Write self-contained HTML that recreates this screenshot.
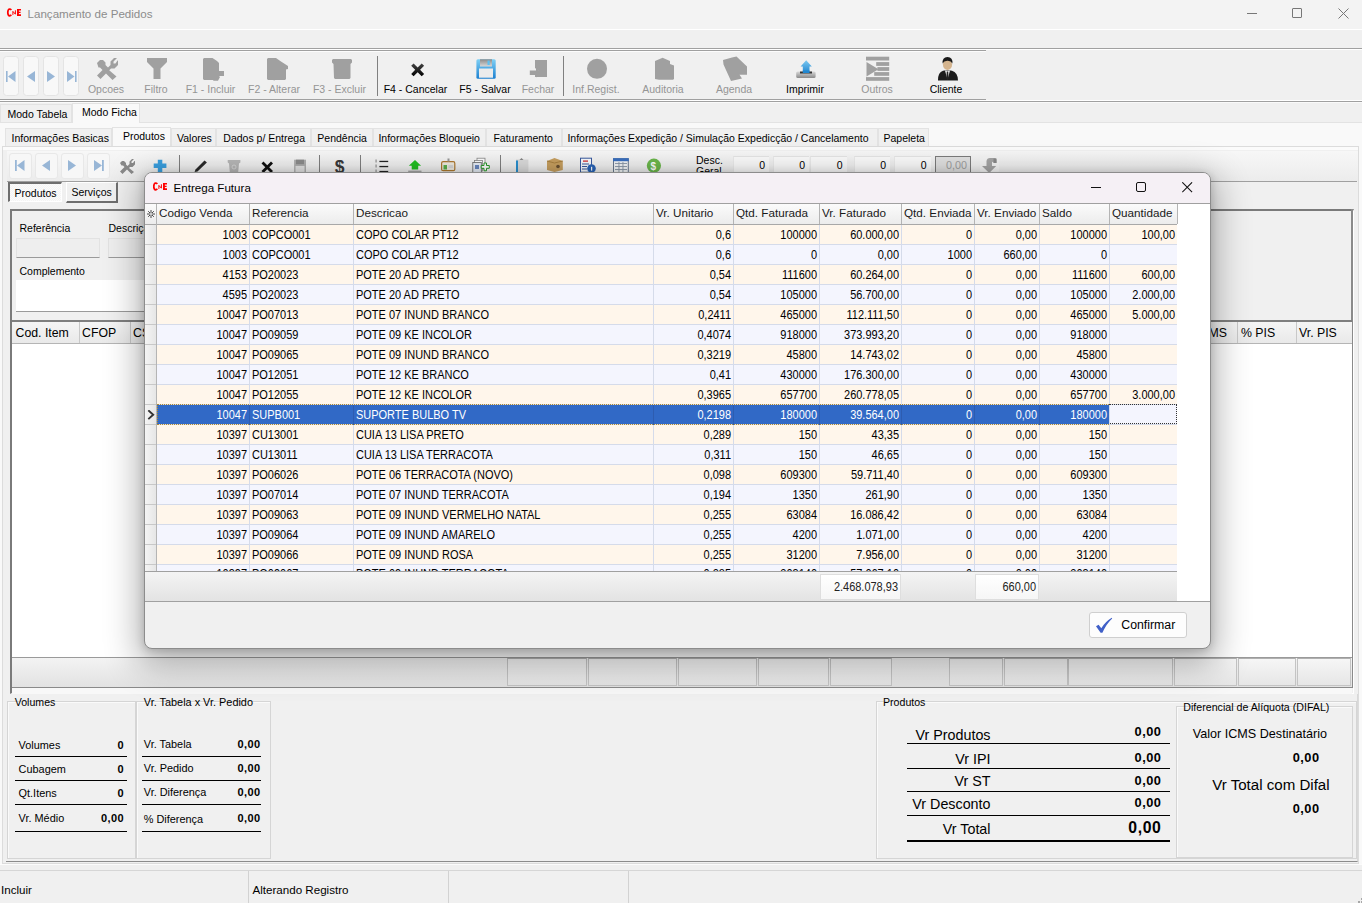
<!DOCTYPE html><html><head><meta charset="utf-8"><style>
html,body{margin:0;padding:0;}
body{width:1362px;height:903px;position:relative;overflow:hidden;background:#f0f0f0;font-family:"Liberation Sans",sans-serif;}
.t{position:absolute;white-space:nowrap;line-height:1;}
div{box-sizing:border-box;}
</style></head><body>
<div style="position:absolute;left:0px;top:0px;width:1362px;height:29px;background:#f3f3f3;"></div>
<div style="position:absolute;left:0px;top:29px;width:1362px;height:1px;background:#ffffff;"></div>
<svg style="position:absolute;left:6px;top:8px" width="16" height="10" viewBox="6 8 16 10"><path d="M11.3 10.0 Q10.6 9.0 9.7 9.0 Q7.8 9.2 7.8 12.4 Q7.8 15.6 9.7 15.8 Q10.6 15.8 11.3 14.8" stroke="#f00" stroke-width="1.7" fill="none"/><path d="M12.9 14.9 V11.4 L15.4 14.2 V10.3" stroke="#f00" stroke-width="1.0" fill="none"/><path d="M17 8.9 H21 V10.6 H18.9 V11.7 H20.6 V13.1 H18.9 V14.3 H21 V16 H17 Z" fill="#f00"/></svg>
<div class="t" style="left:27.5px;top:8px;font-size:11.6px;color:#8c8c8c;font-weight:400;">Lançamento de Pedidos</div>
<div style="position:absolute;left:1247px;top:13px;width:10px;height:1px;background:#777;"></div>
<div style="position:absolute;left:1292px;top:8px;width:10px;height:10px;border:1px solid #777;border-radius:1px;"></div>
<svg style="position:absolute;left:1338px;top:8px" width="11" height="11"><path d="M0.5 0.5 L10.5 10.5 M10.5 0.5 L0.5 10.5" stroke="#777" stroke-width="1"/></svg>
<div style="position:absolute;left:0px;top:48px;width:1362px;height:1px;background:#a0a0a0;"></div>
<div style="position:absolute;left:0px;top:49px;width:1362px;height:1px;background:#ffffff;"></div>
<div style="position:absolute;left:0px;top:50px;width:986px;height:1px;background:#a0a0a0;"></div>
<div style="position:absolute;left:0px;top:51px;width:986px;height:1px;background:#fcfcfc;"></div>
<div style="position:absolute;left:0px;top:99px;width:986px;height:1px;background:#a0a0a0;"></div>
<div style="position:absolute;left:0px;top:100px;width:1362px;height:1px;background:#ffffff;"></div>
<div style="position:absolute;left:0px;top:101px;width:1362px;height:1px;background:#a0a0a0;"></div>
<div style="position:absolute;left:0px;top:102px;width:1362px;height:1px;background:#fafafa;"></div>
<div style="position:absolute;left:2.6px;top:55.6px;width:16.7px;height:40.7px;background:#f8f8f8;border:1px solid #e4e4e4;border-radius:3.5px;"></div>
<div style="position:absolute;left:22.5px;top:55.6px;width:16.7px;height:40.7px;background:#f8f8f8;border:1px solid #e4e4e4;border-radius:3.5px;"></div>
<div style="position:absolute;left:42.5px;top:55.6px;width:16.7px;height:40.7px;background:#f8f8f8;border:1px solid #e4e4e4;border-radius:3.5px;"></div>
<div style="position:absolute;left:62.6px;top:55.6px;width:16.7px;height:40.7px;background:#f8f8f8;border:1px solid #e4e4e4;border-radius:3.5px;"></div>
<svg style="position:absolute;left:0;top:0;pointer-events:none" width="90" height="100"><rect x="6" y="71" width="1.6" height="11" fill="#98b6d6"/><path d="M8 76.5 L15.5 71 L15.5 82 Z" fill="#98b6d6"/><path d="M27 76.5 L35 71 L35 82 Z" fill="#98b6d6"/><path d="M55 76.5 L47 71 L47 82 Z" fill="#98b6d6"/><path d="M74.5 76.5 L67 71 L67 82 Z" fill="#98b6d6"/><rect x="75" y="71" width="1.6" height="11" fill="#98b6d6"/></svg>
<div class="t" style="left:56px;width:100px;text-align:center;top:84px;font-size:10.5px;color:#959595">Opcoes</div>
<div class="t" style="left:106px;width:100px;text-align:center;top:84px;font-size:10.5px;color:#959595">Filtro</div>
<div class="t" style="left:160.5px;width:100px;text-align:center;top:84px;font-size:10.5px;color:#959595">F1 - Incluir</div>
<div class="t" style="left:224px;width:100px;text-align:center;top:84px;font-size:10.5px;color:#959595">F2 - Alterar</div>
<div class="t" style="left:289.5px;width:100px;text-align:center;top:84px;font-size:10.5px;color:#959595">F3 - Excluir</div>
<div class="t" style="left:365.5px;width:100px;text-align:center;top:84px;font-size:10.5px;color:#000">F4 - Cancelar</div>
<div class="t" style="left:435px;width:100px;text-align:center;top:84px;font-size:10.5px;color:#000">F5 - Salvar</div>
<div class="t" style="left:488px;width:100px;text-align:center;top:84px;font-size:10.5px;color:#959595">Fechar</div>
<div class="t" style="left:546px;width:100px;text-align:center;top:84px;font-size:10.5px;color:#959595">Inf.Regist.</div>
<div class="t" style="left:613px;width:100px;text-align:center;top:84px;font-size:10.5px;color:#959595">Auditoria</div>
<div class="t" style="left:684px;width:100px;text-align:center;top:84px;font-size:10.5px;color:#959595">Agenda</div>
<div class="t" style="left:755px;width:100px;text-align:center;top:84px;font-size:10.5px;color:#000">Imprimir</div>
<div class="t" style="left:827px;width:100px;text-align:center;top:84px;font-size:10.5px;color:#959595">Outros</div>
<div class="t" style="left:896px;width:100px;text-align:center;top:84px;font-size:10.5px;color:#000">Cliente</div>
<div style="position:absolute;left:377px;top:56px;width:1px;height:40px;background:#808080;"></div>
<div style="position:absolute;left:563px;top:56px;width:1px;height:40px;background:#808080;"></div>

<svg style="position:absolute;left:0;top:0" width="990" height="100">
 <defs>
  <linearGradient id="gx" x1="0" y1="0" x2="0" y2="1"><stop offset="0" stop-color="#444"/><stop offset="1" stop-color="#000"/></linearGradient>
  <linearGradient id="gfl" x1="0" y1="0" x2="0" y2="1"><stop offset="0" stop-color="#7fd0f5"/><stop offset="1" stop-color="#1a7fd0"/></linearGradient>
  <linearGradient id="gsl" x1="0" y1="0" x2="0" y2="1"><stop offset="0" stop-color="#8a8a8a"/><stop offset="1" stop-color="#d8d8d8"/></linearGradient>
  <linearGradient id="gar" x1="0" y1="0" x2="0" y2="1"><stop offset="0" stop-color="#7cc8f0"/><stop offset="1" stop-color="#1f86d0"/></linearGradient>
  <linearGradient id="gtr" x1="0" y1="0" x2="0" y2="1"><stop offset="0" stop-color="#d8d8d8"/><stop offset="1" stop-color="#8a8a8a"/></linearGradient>
 </defs>
 <g fill="#a0a0a0">
  <!-- opcoes -->
  <path d="M97 63 L100 60 H103 L105.5 62.5 V65 L108 67.5 L110.5 65 V61.5 L114 58 H117 L113.5 61.5 V63.5 L115.5 63.5 L117.5 60.5 H118 V65 L114.5 68.5 H111 L109.2 70.3 L116.5 76.5 L112.5 80 L106 73.5 L100.5 79 L97 75.5 L102.5 70 L100 67.5 H98.5 Z"/>
  <!-- filtro -->
  <path d="M147 58 H167 V62 L160.5 68.5 V79 H153.5 V68.5 L147 62 Z"/>
  <!-- F1 -->
  <path d="M203 59 L204 58 H212.5 L217 61 L219 63 V71 H224 V76 H219 L220 77 L218 80.7 H213.5 L213 80 H204 L203 79 Z"/>
  <!-- F2 -->
  <path d="M267 59 L268 58 H276 L281 61.5 L288 66 V69 L286 69.5 V79 L285 80 H275 L274.5 80.5 L273 80 H268 L267 79 Z"/>
  <!-- F3 -->
  <path d="M332 60 L333 59 H351 L352 60 V62.5 L350.5 64 V78 L349.5 79 H335 L334 78 L333.5 64 L332 62.5 Z"/>
  <!-- Fechar -->
  <path d="M535 60 H547 V77 H535 V74.2 L539.5 71.2 L535 68 Z"/>
  <path d="M529.8 70.5 H536 V67.5 L541 72.5 L536 77.5 V75 H529.8 Z"/>
  <!-- inf regist -->
  <circle cx="597" cy="68.85" r="10"/>
  <!-- auditoria -->
  <path d="M655 61 L662.6 57.7 L670 61 V64 L674 65.5 V79 L673 79.8 H659 L655 79 Z"/>
  <!-- agenda -->
  <path d="M723 60 L732 57.5 L736.5 56.6 L747 66.5 V74.8 H739.5 L742 78.5 L731 81 L723.5 64.5 Z"/>
  <!-- outros -->
  <rect x="866" y="56.7" width="23.2" height="3.8"/><rect x="876.2" y="62.1" width="13" height="3.8"/><rect x="877.4" y="67.1" width="11.8" height="3.8"/><rect x="874.2" y="72.1" width="15" height="3.7"/><rect x="866" y="77.1" width="23.2" height="3.7"/>
  <path d="M866.5 62 L878.5 69.2 L866.5 76.5 Z"/>
 </g>
 <!-- F4 X -->
 <path d="M411.2 65.8 L413.6 63.4 L417.65 67.4 L421.7 63.4 L424.1 65.8 L420.1 69.85 L424.1 73.9 L421.7 76.3 L417.65 72.3 L413.6 76.3 L411.2 73.9 L415.2 69.85 Z" fill="url(#gx)"/>
 <!-- F5 floppy -->
 <rect x="476.4" y="59.3" width="19.3" height="19.4" rx="1.5" fill="url(#gfl)"/>
 <rect x="480" y="59.3" width="12" height="7.2" fill="url(#gsl)"/>
 <rect x="487.5" y="60.5" width="2.2" height="4.5" fill="#5ec0f0"/>
 <rect x="479" y="68.5" width="14" height="9.2" fill="#ececec"/>
 <!-- imprimir -->
 <path d="M806.2 60.2 L811.8 66.5 H809.5 V73 H802.8 V66.5 H800.6 Z" fill="url(#gar)"/>
 <rect x="796.2" y="71.5" width="19.4" height="6.5" rx="1.5" fill="url(#gtr)"/>
 <rect x="800" y="71.5" width="12" height="2" fill="#333"/>
 <rect x="802.8" y="70.5" width="6.7" height="2.5" fill="#1f86d0"/>
 <!-- cliente -->
 <path d="M938 80.5 Q937.8 72.5 943 70.8 L947.5 70 L952 70.8 Q957.8 72.5 958 80.5 Z" fill="#1c1c1c"/>
 <path d="M945 70.5 L947.5 79.5 L950 70.5 Z" fill="#f4f4f4"/>
 <path d="M946.8 71.5 H948.2 L948.6 78.5 L947.5 80 L946.4 78.5 Z" fill="#222"/>
 <ellipse cx="947.5" cy="64.5" rx="4.6" ry="5.4" fill="#d4b48e"/>
 <path d="M942.6 63.5 Q942 57.2 947.5 57 Q953 57.2 952.4 63.5 Q951 60.5 947.5 60.7 Q944 60.5 942.6 63.5 Z" fill="#1a1a1a"/>
</svg>
<div style="position:absolute;left:0px;top:104px;width:72px;height:19px;background:#f0f0f0;border:1px solid #e3e3e3;border-bottom:none;"></div>
<div class="t" style="left:7.5px;top:109px;font-size:10.5px;color:#000;font-weight:400;">Modo Tabela</div>
<div style="position:absolute;left:72px;top:102.5px;width:68px;height:21px;background:#f9f9f9;border:1px solid #e3e3e3;border-bottom:none;"></div>
<div class="t" style="left:82px;top:107px;font-size:10.5px;color:#000;font-weight:400;">Modo Ficha</div>
<div style="position:absolute;left:0px;top:123px;width:1362px;height:741px;background:#f9f9f9;"></div>
<div style="position:absolute;left:0px;top:122px;width:72px;height:1px;background:#e3e3e3;"></div>
<div style="position:absolute;left:140px;top:122px;width:1222px;height:1px;background:#e3e3e3;"></div>
<div style="position:absolute;left:4.5px;top:128px;width:107.5px;height:18.5px;background:#f0f0f0;border:1px solid #e3e3e3;border-bottom:none;"></div>
<div class="t" style="left:11.5px;top:133px;font-size:10.5px;color:#000;font-weight:400;">Informações Basicas</div>
<div style="position:absolute;left:112px;top:126.5px;width:58.5px;height:20px;background:#f9f9f9;border:1px solid #e3e3e3;border-bottom:none;"></div>
<div class="t" style="left:122.9px;top:131px;font-size:10.5px;color:#000;font-weight:400;">Produtos</div>
<div style="position:absolute;left:170.5px;top:128px;width:45.5px;height:18.5px;background:#f0f0f0;border:1px solid #e3e3e3;border-bottom:none;"></div>
<div class="t" style="left:177px;top:133px;font-size:10.5px;color:#000;font-weight:400;">Valores</div>
<div style="position:absolute;left:216px;top:128px;width:95px;height:18.5px;background:#f0f0f0;border:1px solid #e3e3e3;border-bottom:none;"></div>
<div class="t" style="left:223.3px;top:133px;font-size:10.5px;color:#000;font-weight:400;">Dados p/ Entrega</div>
<div style="position:absolute;left:311px;top:128px;width:61.5px;height:18.5px;background:#f0f0f0;border:1px solid #e3e3e3;border-bottom:none;"></div>
<div class="t" style="left:317.3px;top:133px;font-size:10.5px;color:#000;font-weight:400;">Pendência</div>
<div style="position:absolute;left:372.5px;top:128px;width:113.5px;height:18.5px;background:#f0f0f0;border:1px solid #e3e3e3;border-bottom:none;"></div>
<div class="t" style="left:378.4px;top:133px;font-size:10.5px;color:#000;font-weight:400;">Informações Bloqueio</div>
<div style="position:absolute;left:486px;top:128px;width:76px;height:18.5px;background:#f0f0f0;border:1px solid #e3e3e3;border-bottom:none;"></div>
<div class="t" style="left:493.4px;top:133px;font-size:10.5px;color:#000;font-weight:400;">Faturamento</div>
<div style="position:absolute;left:562px;top:128px;width:315.5px;height:18.5px;background:#f0f0f0;border:1px solid #e3e3e3;border-bottom:none;"></div>
<div class="t" style="left:567.4px;top:133px;font-size:10.5px;color:#000;font-weight:400;">Informações Expedição / Simulação Expedicção / Cancelamento</div>
<div style="position:absolute;left:877.5px;top:128px;width:51.5px;height:18.5px;background:#f0f0f0;border:1px solid #e3e3e3;border-bottom:none;"></div>
<div class="t" style="left:883.5px;top:133px;font-size:10.5px;color:#000;font-weight:400;">Papeleta</div>
<div style="position:absolute;left:2px;top:146px;width:1357px;height:718px;background:#f0f0f0;border:1px solid #dcdcdc;"></div>
<div style="position:absolute;left:3px;top:147px;width:1355px;height:3px;background:#fbfbfb;"></div>
<div style="position:absolute;left:7px;top:150.5px;width:1351px;height:30.5px;background:linear-gradient(#f7f7f7,#ececec);"></div>
<div style="position:absolute;left:7px;top:181px;width:1350px;height:1px;background:#a0a0a0;"></div>
<div style="position:absolute;left:9px;top:152.5px;width:22.5px;height:26.5px;background:#f7f7f7;border:1px solid #e8e8e8;border-radius:3px;"></div>
<div style="position:absolute;left:35px;top:152.5px;width:22.5px;height:26.5px;background:#f7f7f7;border:1px solid #e8e8e8;border-radius:3px;"></div>
<div style="position:absolute;left:61px;top:152.5px;width:22.5px;height:26.5px;background:#f7f7f7;border:1px solid #e8e8e8;border-radius:3px;"></div>
<div style="position:absolute;left:87px;top:152.5px;width:22.5px;height:26.5px;background:#f7f7f7;border:1px solid #e8e8e8;border-radius:3px;"></div>
<svg style="position:absolute;left:0;top:0" width="1010" height="182"><rect x="15" y="160" width="1.8" height="11" fill="#98b6d6"/><path d="M17 165.5 L24.5 160 L24.5 171 Z" fill="#98b6d6"/><path d="M42 165.5 L50 160 L50 171 Z" fill="#98b6d6"/><path d="M76 165.5 L68 160 L68 171 Z" fill="#98b6d6"/><path d="M102 165.5 L94 160 L94 171 Z" fill="#98b6d6"/><rect x="102" y="160" width="1.8" height="11" fill="#98b6d6"/><path d="M120 163 L122 161 H124 L126 163 V164.5 L127.5 166 L129.5 164 V161.5 L132 159 H134 L131.5 161.5 V163 H133 L134.5 161 H135 V164.5 L132.5 167 H130 L129 168 L134 172 L131.5 174 L127 169.5 L122.5 174 L120 171.5 L124.5 167 L123 165.5 H121.5 Z" fill="#8a8a8a"/><path d="M157.8 159.7 H162.3 V163.6 H166.4 V167.9 H162.3 V172 H157.8 V167.9 H153.7 V163.6 H157.8 Z" fill="#3aa0e0"/><rect x="179" y="155" width="1" height="26" fill="#808080"/><path d="M194.6 172 L195.5 169.5 L204.5 160.5 L206.9 162.5 L197.5 171.5 Z" fill="#2a2a2a"/><path d="M227.7 160 H240.4 V162.5 L239 163.5 L238.2 172 H229.8 L229 163.5 L227.7 162.5 Z" fill="#b8b8b8"/><circle cx="234" cy="167" r="2" fill="none" stroke="#ddd" stroke-width="0.8"/><path d="M261.5 163.5 L263.5 161.5 L267.25 165.3 L271 161.5 L273 163.5 L269.2 167.3 L273 171.1 L271 173 L267.25 169.2 L263.5 173 L261.5 171.1 L265.3 167.3 Z" fill="#111"/><rect x="294.1" y="159.7" width="11.9" height="12.3" fill="#b0b0b0"/><rect x="296" y="159.7" width="8" height="4.5" fill="#8c8c8c"/><rect x="295.5" y="166" width="9" height="6" fill="#e4e4e4"/><rect x="319" y="155" width="1" height="26" fill="#808080"/><text x="334.8" y="173" font-family="Liberation Sans" font-weight="700" font-size="17.5" fill="#3a3a3a">$</text><rect x="360" y="155" width="1" height="26" fill="#808080"/><g fill="#222"><rect x="379.4" y="160.8" width="8.8" height="1.3"/><rect x="379.4" y="165.9" width="8.8" height="1.3"/><rect x="379.4" y="170.9" width="8.8" height="1.3"/></g><g fill="#aaa"><rect x="375.3" y="159.5" width="1.6" height="3"/><rect x="375.3" y="164.5" width="1.6" height="3"/><rect x="375.3" y="169.5" width="1.6" height="3"/></g><path d="M415 160 L421.1 165.8 H418.2 V169.4 H411.7 V165.8 H408.8 Z" fill="#22c022"/><rect x="408.2" y="170.6" width="13.3" height="2" fill="#a8a8a8"/><rect x="441.6" y="161.7" width="13.2" height="9" rx="1.5" fill="#f0ece0" stroke="#b07a30" stroke-width="1.2"/><rect x="447.5" y="158.5" width="2" height="3" fill="#999"/><rect x="443.5" y="165" width="3.5" height="4.5" fill="#5ab04a"/><rect x="448.5" y="165" width="4.5" height="3" fill="#d8d8d8"/><rect x="477" y="158.2" width="8" height="10" fill="#fff" stroke="#888" stroke-width="0.8"/><rect x="474.5" y="160.5" width="8" height="10.5" fill="#fff" stroke="#888" stroke-width="0.8"/><rect x="472.8" y="162.5" width="8.5" height="10" fill="#e8eef8" stroke="#666" stroke-width="0.8"/><rect x="475" y="165" width="4" height="4" fill="#6a88c0"/><path d="M484 163 h2.5 v2.5 h2.8 v2.8 h-2.8 v2.5 h-2.5 v-2.5 h-2.8 v-2.8 h2.8z" fill="#fff" stroke="#2a9a2a" stroke-width="1"/><rect x="500" y="155" width="1" height="26" fill="#808080"/><rect x="516" y="159.5" width="12.4" height="13" fill="#dcdcdc"/><rect x="516" y="160.5" width="2" height="12" fill="#2a90d0"/><path d="M519.5 160 L521.5 158 L523.5 160 Z" fill="#888"/><path d="M547 161 L554.5 158 L562.8 161 V170 L554.5 172 L547 170 Z" fill="#c8a060"/><path d="M547 161 L554.5 163 L562.8 161" stroke="#a07838" stroke-width="0.8" fill="none"/><circle cx="558" cy="166.5" r="1.8" fill="#6a5030"/><rect x="580.5" y="158.2" width="11" height="14" fill="#fafcff" stroke="#3a5aa0" stroke-width="1"/><rect x="583" y="160.5" width="5" height="1.2" fill="#d02020"/><g fill="#3a5aa0"><rect x="582" y="163.5" width="7" height="1"/><rect x="582" y="166" width="5" height="1"/><rect x="582" y="168.5" width="5" height="1"/></g><circle cx="591.5" cy="168.5" r="4.3" fill="#2a64b8"/><rect x="591" y="166.8" width="1.2" height="3.8" fill="#fff"/><rect x="613.5" y="158.7" width="14.8" height="13.8" fill="#f4f6f8" stroke="#6a7a90" stroke-width="1"/><rect x="613" y="158.2" width="15.8" height="3" fill="#3a70c0"/><g fill="#8a98a8"><rect x="615" y="163" width="12" height="0.9"/><rect x="615" y="166" width="12" height="0.9"/><rect x="615" y="169" width="12" height="0.9"/><rect x="618.5" y="162" width="0.9" height="10"/><rect x="622.5" y="162" width="0.9" height="10"/></g><circle cx="653.9" cy="165.7" r="7.1" fill="#6cb84c"/><text x="650.4" y="169.8" font-family="Liberation Sans" font-weight="700" font-size="10" fill="#fff">$</text></svg>
<div class="t" style="left:696px;top:154.5px;font-size:10.5px;color:#000;font-weight:400;">Desc.</div>
<div class="t" style="left:696px;top:166px;font-size:10.5px;color:#000;font-weight:400;">Geral</div>
<div style="position:absolute;left:733px;top:156px;width:36px;height:17px;background:#fcfcfc;border-top:1px solid #e6e6e6;border-left:1px solid #ececec;"></div>
<div class="t" style="right:597px;top:160px;font-size:10.5px;color:#000;font-weight:400;">0</div>
<div style="position:absolute;left:772.5px;top:156px;width:36.5px;height:17px;background:#fcfcfc;border-top:1px solid #e6e6e6;border-left:1px solid #ececec;"></div>
<div class="t" style="right:557px;top:160px;font-size:10.5px;color:#000;font-weight:400;">0</div>
<div style="position:absolute;left:809.5px;top:156px;width:37.0px;height:17px;background:#fcfcfc;border-top:1px solid #e6e6e6;border-left:1px solid #ececec;"></div>
<div class="t" style="right:519.5px;top:160px;font-size:10.5px;color:#000;font-weight:400;">0</div>
<div style="position:absolute;left:853.5px;top:156px;width:36.5px;height:17px;background:#fcfcfc;border-top:1px solid #e6e6e6;border-left:1px solid #ececec;"></div>
<div class="t" style="right:476px;top:160px;font-size:10.5px;color:#000;font-weight:400;">0</div>
<div style="position:absolute;left:893.5px;top:156px;width:37.0px;height:17px;background:#fcfcfc;border-top:1px solid #e6e6e6;border-left:1px solid #ececec;"></div>
<div class="t" style="right:435.5px;top:160px;font-size:10.5px;color:#000;font-weight:400;">0</div>
<div style="position:absolute;left:934.5px;top:156px;width:36px;height:17px;background:#e2e2e2;border:1px solid #7c7c7c;border-bottom:none;"></div>
<div class="t" style="right:395px;top:160.3px;font-size:10.8px;color:#a0a0a0;font-weight:400;">0,00</div>
<div style="position:absolute;left:980px;top:157px;width:18.5px;height:16px;background:#f6f6f6;border-radius:3px;"></div>
<svg style="position:absolute;left:980px;top:157px" width="19" height="17"><path d="M6.5 4 Q7 1 10 1 H14.5 Q16.5 1 16.5 3 V6 H13.5 V5 Q12.5 4.5 12 5.5 V9 H16.2 L9.2 16 L2 9 H6.5 Z" fill="#a6a6a6"/><path d="M13.5 1.5 H16.5 V6 H13.5 Z" fill="#8a8a8a"/></svg>
<div style="position:absolute;left:8px;top:181.5px;width:54px;height:20.5px;background:repeating-conic-gradient(#f4f4f4 0 25%,#fbfbfb 0 50%) 0 0/2px 2px;border-top:2px solid #6e6e6e;border-left:2px solid #6e6e6e;border-bottom:1px solid #fff;border-right:1px solid #fff;"></div>
<div class="t" style="left:14.5px;top:188px;font-size:10.5px;color:#000;font-weight:400;">Produtos</div>
<div style="position:absolute;left:66px;top:182px;width:52px;height:20.5px;background:#f0f0f0;border-top:1px solid #fff;border-left:1px solid #fff;border-bottom:2px solid #6e6e6e;border-right:2px solid #6e6e6e;"></div>
<div class="t" style="left:71.5px;top:187.2px;font-size:10.5px;color:#000;font-weight:400;">Serviços</div>
<div style="position:absolute;left:10px;top:209px;width:1344px;height:485px;background:#f0f0f0;border-top:2px solid #7a7a7a;border-left:2px solid #7a7a7a;border-bottom:1px solid #fff;border-right:1px solid #fff;"></div>
<div style="position:absolute;left:12px;top:687px;width:1340px;height:7px;background:#f8f8f8;"></div>
<div style="position:absolute;left:12px;top:686.5px;width:1341px;height:1.2px;background:#8a8a8a;"></div>
<div style="position:absolute;left:1351px;top:209px;width:1.5px;height:478px;background:#8a8a8a;"></div>
<div class="t" style="left:19.5px;top:223px;font-size:10.5px;color:#000;font-weight:400;">Referência</div>
<div style="position:absolute;left:16px;top:238px;width:84px;height:20px;background:#eeeeee;border:1px solid #e2e2e2;border-bottom:1px solid #9a9a9a;"></div>
<div class="t" style="left:108.5px;top:223px;font-size:10.5px;color:#000;font-weight:400;">Descrição</div>
<div style="position:absolute;left:108px;top:238px;width:300px;height:20px;background:#eeeeee;border:1px solid #e2e2e2;border-bottom:1px solid #9a9a9a;"></div>
<div class="t" style="left:19.5px;top:266px;font-size:10.5px;color:#000;font-weight:400;">Complemento</div>
<div style="position:absolute;left:16px;top:280px;width:1180px;height:32px;background:#ffffff;border-bottom:1px solid #9a9a9a;"></div>
<div style="position:absolute;left:12px;top:320px;width:1340px;height:2px;background:#7f7f7f;"></div>
<div style="position:absolute;left:12px;top:322px;width:1340px;height:22px;background:linear-gradient(#f5f5f5,#e9e9e9);border-bottom:1px solid #b5b5b5;"></div>
<div style="position:absolute;left:79px;top:322px;width:1px;height:21px;background:#c8c8c8;"></div>
<div style="position:absolute;left:130px;top:322px;width:1px;height:21px;background:#c8c8c8;"></div>
<div style="position:absolute;left:1237px;top:322px;width:1px;height:21px;background:#c8c8c8;"></div>
<div style="position:absolute;left:1296px;top:322px;width:1px;height:21px;background:#c8c8c8;"></div>
<div class="t" style="left:15.5px;top:326.5px;font-size:12.3px;color:#000;font-weight:400;">Cod. Item</div>
<div class="t" style="left:82px;top:326.5px;font-size:12.3px;color:#000;font-weight:400;">CFOP</div>
<div class="t" style="left:133px;top:326.5px;font-size:12.3px;color:#000;font-weight:400;">CS</div>
<div class="t" style="right:135px;top:326.5px;font-size:12.3px;color:#000;font-weight:400;">MS</div>
<div class="t" style="left:1241px;top:326.5px;font-size:12.3px;color:#000;font-weight:400;">% PIS</div>
<div class="t" style="left:1299px;top:326.5px;font-size:12.3px;color:#000;font-weight:400;">Vr. PIS</div>
<div style="position:absolute;left:12px;top:344px;width:1340px;height:312.5px;background:#ffffff;"></div>
<div style="position:absolute;left:12px;top:656.5px;width:1340px;height:1px;background:#9a9a9a;"></div>
<div style="position:absolute;left:12px;top:657.5px;width:1340px;height:29px;background:linear-gradient(#f3f3f3,#e2e2e2);"></div>
<div style="position:absolute;left:12px;top:686.5px;width:1341px;height:1.2px;background:#8a8a8a;"></div>
<div style="position:absolute;left:507px;top:657.5px;width:80px;height:28px;border:1px solid #c4c4c4;border-top-color:#b0b0b0;background:linear-gradient(#f6f6f6,#e6e6e6);"></div>
<div style="position:absolute;left:588px;top:657.5px;width:89px;height:28px;border:1px solid #c4c4c4;border-top-color:#b0b0b0;background:linear-gradient(#f6f6f6,#e6e6e6);"></div>
<div style="position:absolute;left:678px;top:657.5px;width:79px;height:28px;border:1px solid #c4c4c4;border-top-color:#b0b0b0;background:linear-gradient(#f6f6f6,#e6e6e6);"></div>
<div style="position:absolute;left:758px;top:657.5px;width:71px;height:28px;border:1px solid #c4c4c4;border-top-color:#b0b0b0;background:linear-gradient(#f6f6f6,#e6e6e6);"></div>
<div style="position:absolute;left:830px;top:657.5px;width:62px;height:28px;border:1px solid #c4c4c4;border-top-color:#b0b0b0;background:linear-gradient(#f6f6f6,#e6e6e6);"></div>
<div style="position:absolute;left:949px;top:657.5px;width:54px;height:28px;border:1px solid #c4c4c4;border-top-color:#b0b0b0;background:linear-gradient(#f6f6f6,#e6e6e6);"></div>
<div style="position:absolute;left:1004px;top:657.5px;width:63.5px;height:28px;border:1px solid #c4c4c4;border-top-color:#b0b0b0;background:linear-gradient(#f6f6f6,#e6e6e6);"></div>
<div style="position:absolute;left:1068px;top:657.5px;width:105px;height:28px;border:1px solid #c4c4c4;border-top-color:#b0b0b0;background:linear-gradient(#f6f6f6,#e6e6e6);"></div>
<div style="position:absolute;left:1174px;top:657.5px;width:63px;height:28px;border:1px solid #c4c4c4;border-top-color:#b0b0b0;background:linear-gradient(#f6f6f6,#e6e6e6);"></div>
<div style="position:absolute;left:1238px;top:657.5px;width:58px;height:28px;border:1px solid #c4c4c4;border-top-color:#b0b0b0;background:linear-gradient(#f6f6f6,#e6e6e6);"></div>
<div style="position:absolute;left:1297px;top:657.5px;width:54px;height:28px;border:1px solid #c4c4c4;border-top-color:#b0b0b0;background:linear-gradient(#f6f6f6,#e6e6e6);"></div>
<div style="position:absolute;left:6px;top:693.5px;width:1352px;height:168px;background:#f0f0f0;border-bottom:1px solid #8c8c8c;border-right:1px solid #d8d8d8;"></div>
<div style="position:absolute;left:0px;top:864px;width:1362px;height:1px;background:#fcfcfc;"></div>
<div style="position:absolute;left:7px;top:701px;width:129px;height:158px;border:1px solid #d5d5d5;box-shadow:inset 1px 1px 0 #fafafa;"></div>
<div style="position:absolute;left:136px;top:701px;width:135px;height:158px;border:1px solid #d5d5d5;box-shadow:inset 1px 1px 0 #fafafa;"></div>
<div class="t" style="left:14.7px;top:697.3px;font-size:10.6px;color:#000;font-weight:400;">Volumes</div>
<div class="t" style="left:143.8px;top:697.3px;font-size:10.9px;color:#000;font-weight:400;">Vr. Tabela x Vr. Pedido</div>
<div class="t" style="left:18.6px;top:739.7px;font-size:10.9px;color:#000;font-weight:400;">Volumes</div>
<div class="t" style="right:1238px;top:739.5px;font-size:11px;color:#000;font-weight:700;letter-spacing:0.4px;">0</div>
<div class="t" style="left:18.6px;top:763.7px;font-size:10.9px;color:#000;font-weight:400;">Cubagem</div>
<div class="t" style="right:1238px;top:763.5px;font-size:11px;color:#000;font-weight:700;letter-spacing:0.4px;">0</div>
<div class="t" style="left:18.6px;top:787.7px;font-size:10.9px;color:#000;font-weight:400;">Qt.Itens</div>
<div class="t" style="right:1238px;top:787.5px;font-size:11px;color:#000;font-weight:700;letter-spacing:0.4px;">0</div>
<div class="t" style="left:18.6px;top:812.7px;font-size:10.9px;color:#000;font-weight:400;">Vr. Médio</div>
<div class="t" style="right:1238px;top:812.5px;font-size:11px;color:#000;font-weight:700;letter-spacing:0.4px;">0,00</div>
<div style="position:absolute;left:15px;top:755.8px;width:112px;height:1.3px;background:#000;"></div>
<div style="position:absolute;left:15px;top:779.8px;width:112px;height:1.3px;background:#000;"></div>
<div style="position:absolute;left:15px;top:803.8px;width:112px;height:1.3px;background:#000;"></div>
<div style="position:absolute;left:15px;top:830.8px;width:112px;height:1.3px;background:#000;"></div>
<div class="t" style="left:143.8px;top:739.2px;font-size:10.9px;color:#000;font-weight:400;">Vr. Tabela</div>
<div class="t" style="right:1101.5px;top:739.0px;font-size:11px;color:#000;font-weight:700;letter-spacing:0.4px;">0,00</div>
<div class="t" style="left:143.8px;top:763.2px;font-size:10.9px;color:#000;font-weight:400;">Vr. Pedido</div>
<div class="t" style="right:1101.5px;top:763.0px;font-size:11px;color:#000;font-weight:700;letter-spacing:0.4px;">0,00</div>
<div class="t" style="left:143.8px;top:787.0px;font-size:10.9px;color:#000;font-weight:400;">Vr. Diferença</div>
<div class="t" style="right:1101.5px;top:786.8px;font-size:11px;color:#000;font-weight:700;letter-spacing:0.4px;">0,00</div>
<div class="t" style="left:143.8px;top:813.6px;font-size:10.9px;color:#000;font-weight:400;">% Diferença</div>
<div class="t" style="right:1101.5px;top:813.4px;font-size:11px;color:#000;font-weight:700;letter-spacing:0.4px;">0,00</div>
<div style="position:absolute;left:142px;top:755.8px;width:119px;height:1.3px;background:#000;"></div>
<div style="position:absolute;left:142px;top:779.8px;width:119px;height:1.3px;background:#000;"></div>
<div style="position:absolute;left:142px;top:803.8px;width:119px;height:1.3px;background:#000;"></div>
<div style="position:absolute;left:142px;top:830.8px;width:119px;height:1.3px;background:#000;"></div>
<div style="position:absolute;left:876px;top:701px;width:481px;height:158px;border:1px solid #d5d5d5;box-shadow:inset 1px 1px 0 #fafafa;"></div>
<div class="t" style="left:883px;top:697.3px;font-size:10.6px;color:#000;font-weight:400;">Produtos</div>
<div class="t" style="right:371.5px;top:727.7px;font-size:14.3px;color:#000;font-weight:400;">Vr Produtos</div>
<div class="t" style="right:200.5px;top:726.1px;font-size:12.8px;color:#000;font-weight:700;letter-spacing:0.5px;">0,00</div>
<div style="position:absolute;left:907px;top:743px;width:263px;height:1.3px;background:#000;"></div>
<div class="t" style="right:371.5px;top:751.5px;font-size:14.3px;color:#000;font-weight:400;">Vr IPI</div>
<div class="t" style="right:200.5px;top:752px;font-size:12.8px;color:#000;font-weight:700;letter-spacing:0.5px;">0,00</div>
<div style="position:absolute;left:907px;top:768px;width:263px;height:1.3px;background:#000;"></div>
<div class="t" style="right:371.5px;top:774.2px;font-size:14.3px;color:#000;font-weight:400;">Vr ST</div>
<div class="t" style="right:200.5px;top:774.7px;font-size:12.8px;color:#000;font-weight:700;letter-spacing:0.5px;">0,00</div>
<div style="position:absolute;left:907px;top:791px;width:263px;height:1.3px;background:#000;"></div>
<div class="t" style="right:371.5px;top:796.5px;font-size:14.3px;color:#000;font-weight:400;">Vr Desconto</div>
<div class="t" style="right:200.5px;top:797px;font-size:12.8px;color:#000;font-weight:700;letter-spacing:0.5px;">0,00</div>
<div style="position:absolute;left:907px;top:815px;width:263px;height:1.3px;background:#000;"></div>
<div class="t" style="right:371.5px;top:822.1px;font-size:14.3px;color:#000;font-weight:400;">Vr Total</div>
<div class="t" style="right:200.5px;top:820.2px;font-size:15.8px;color:#000;font-weight:700;letter-spacing:0.6px;">0,00</div>
<div style="position:absolute;left:907px;top:839.5px;width:263px;height:2.8px;background:#000;"></div>
<div style="position:absolute;left:1176px;top:705.5px;width:177px;height:152px;border:1px solid #d5d5d5;box-shadow:inset 1px 1px 0 #fafafa;"></div>
<div class="t" style="left:1183.3px;top:701.8px;font-size:10.65px;color:#000;font-weight:400;">Diferencial de Alíquota (DIFAL)</div>
<div class="t" style="left:1192.8px;top:728px;font-size:12.6px;color:#000;font-weight:400;">Valor ICMS Destinatário</div>
<div class="t" style="right:42.40000000000009px;top:751.6px;font-size:12.8px;color:#000;font-weight:700;letter-spacing:0.5px;">0,00</div>
<div class="t" style="right:32.40000000000009px;top:777px;font-size:15.1px;color:#000;font-weight:400;">Vr Total com Difal</div>
<div class="t" style="right:42.40000000000009px;top:803.2px;font-size:12.8px;color:#000;font-weight:700;letter-spacing:0.5px;">0,00</div>
<div style="position:absolute;left:0px;top:869.5px;width:1362px;height:1px;background:#d6d6d6;"></div>
<div style="position:absolute;left:247.5px;top:871px;width:1px;height:32px;background:#d2d2d2;"></div>
<div style="position:absolute;left:447.5px;top:871px;width:1px;height:32px;background:#d2d2d2;"></div>
<div style="position:absolute;left:627.5px;top:871px;width:1px;height:32px;background:#d2d2d2;"></div>
<div class="t" style="left:1px;top:883.5px;font-size:11.6px;color:#000;font-weight:400;">Incluir</div>
<div style="position:absolute;left:1360.5px;top:898px;width:2px;height:2px;background:#a8a8a8;"></div>
<div style="position:absolute;left:1357.5px;top:901px;width:2px;height:2px;background:#a8a8a8;"></div>
<div style="position:absolute;left:1360.5px;top:901px;width:2px;height:2px;background:#a8a8a8;"></div>
<div class="t" style="left:252.5px;top:883.5px;font-size:11.6px;color:#000;font-weight:400;">Alterando Registro</div>
<div style="position:absolute;left:144px;top:172px;width:1067px;height:477px;border:1px solid #8c8c8c;border-radius:8px;background:#f0f0f0;overflow:hidden;box-shadow:0 10px 34px 6px rgba(0,0,0,0.30), 0 2px 10px rgba(0,0,0,0.18);">
<div style="position:absolute;left:-1.00px;top:-1.00px;width:1067px;height:31px;background:#f5f0f5;"></div>
<div style="position:absolute;left:-1.00px;top:30.00px;width:1067px;height:1px;background:#a0a0a0;"></div>
<svg style="position:absolute;left:7px;top:8.9px" width="16" height="10" viewBox="6 8 16 10"><path d="M11.3 10.0 Q10.6 9.0 9.7 9.0 Q7.8 9.2 7.8 12.4 Q7.8 15.6 9.7 15.8 Q10.6 15.8 11.3 14.8" stroke="#f00" stroke-width="1.7" fill="none"/><path d="M12.9 14.9 V11.4 L15.4 14.2 V10.3" stroke="#f00" stroke-width="1.0" fill="none"/><path d="M17 8.9 H21 V10.6 H18.9 V11.7 H20.6 V13.1 H18.9 V14.3 H21 V16 H17 Z" fill="#f00"/></svg>
<div class="t" style="left:28.50px;top:9.00px;font-size:11.6px;color:#000;font-weight:400;">Entrega Futura</div>
<div style="position:absolute;left:946.00px;top:14.00px;width:10px;height:1px;background:#111;"></div>
<div style="position:absolute;left:991.00px;top:9.00px;width:10px;height:10px;border:1px solid #111;border-radius:2px;"></div>
<svg style="position:absolute;left:1036.8px;top:8.800000000000011px" width="11" height="11"><path d="M0.3 0.3 L10.1 10.1 M10.1 0.3 L0.3 10.1" stroke="#111" stroke-width="1.05"/></svg>
<div style="position:absolute;left:0.00px;top:31.00px;width:1065px;height:397px;background:#ffffff;"></div>
<div style="position:absolute;left:0.00px;top:31.00px;width:1032px;height:20px;background:linear-gradient(#fbfbfb,#ececec);"></div>
<div style="position:absolute;left:0.00px;top:51.00px;width:1032px;height:1px;background:#a8a8a8;"></div>
<div style="position:absolute;left:11.00px;top:31.00px;width:1px;height:20px;background:#b4b4b4;"></div>
<div style="position:absolute;left:104.00px;top:31.00px;width:1px;height:20px;background:#b4b4b4;"></div>
<div style="position:absolute;left:208.00px;top:31.00px;width:1px;height:20px;background:#b4b4b4;"></div>
<div style="position:absolute;left:508.00px;top:31.00px;width:1px;height:20px;background:#b4b4b4;"></div>
<div style="position:absolute;left:588.00px;top:31.00px;width:1px;height:20px;background:#b4b4b4;"></div>
<div style="position:absolute;left:674.00px;top:31.00px;width:1px;height:20px;background:#b4b4b4;"></div>
<div style="position:absolute;left:756.00px;top:31.00px;width:1px;height:20px;background:#b4b4b4;"></div>
<div style="position:absolute;left:829.00px;top:31.00px;width:1px;height:20px;background:#b4b4b4;"></div>
<div style="position:absolute;left:894.00px;top:31.00px;width:1px;height:20px;background:#b4b4b4;"></div>
<div style="position:absolute;left:964.00px;top:31.00px;width:1px;height:20px;background:#b4b4b4;"></div>
<div style="position:absolute;left:1032.00px;top:31.00px;width:1px;height:20px;background:#b4b4b4;"></div>
<div class="t" style="left:14.00px;top:34.30px;font-size:11.7px;color:#1a1a1a;font-weight:400;">Codigo Venda</div>
<div class="t" style="left:107.00px;top:34.30px;font-size:11.7px;color:#1a1a1a;font-weight:400;">Referencia</div>
<div class="t" style="left:211.00px;top:34.30px;font-size:11.7px;color:#1a1a1a;font-weight:400;">Descricao</div>
<div class="t" style="left:511.00px;top:34.30px;font-size:11.7px;color:#1a1a1a;font-weight:400;">Vr. Unitario</div>
<div class="t" style="left:591.00px;top:34.30px;font-size:11.7px;color:#1a1a1a;font-weight:400;">Qtd. Faturada</div>
<div class="t" style="left:677.00px;top:34.30px;font-size:11.7px;color:#1a1a1a;font-weight:400;">Vr. Faturado</div>
<div class="t" style="left:759.00px;top:34.30px;font-size:11.7px;color:#1a1a1a;font-weight:400;">Qtd. Enviada</div>
<div class="t" style="left:832.00px;top:34.30px;font-size:11.7px;color:#1a1a1a;font-weight:400;">Vr. Enviado</div>
<div class="t" style="left:897.00px;top:34.30px;font-size:11.7px;color:#1a1a1a;font-weight:400;">Saldo</div>
<div class="t" style="left:967.00px;top:34.30px;font-size:11.7px;color:#1a1a1a;font-weight:400;">Quantidade</div>
<svg style="position:absolute;left:1.5px;top:37.400000000000006px" width="8" height="8"><g stroke="#333" stroke-width="0.9"><path d="M4 0 V8 M0 4 H8 M1.2 1.2 L6.8 6.8 M6.8 1.2 L1.2 6.8"/></g><circle cx="4" cy="4" r="1.1" fill="#f2f2f2"/></svg>
<div style="position:absolute;left:0.00px;top:52.00px;width:11px;height:19px;background:linear-gradient(90deg,#f4f4f4,#e6e6e6);"></div>
<div style="position:absolute;left:0.00px;top:71.00px;width:11px;height:1px;background:#c8c8c8;"></div>
<div style="position:absolute;left:11.00px;top:51.00px;width:1px;height:21px;background:#b4b4b4;"></div>
<div style="position:absolute;left:12.00px;top:52.00px;width:1020px;height:19px;background:#fff6eb;"></div>
<div style="position:absolute;left:12.00px;top:71.00px;width:1020px;height:1px;background:#d5dbea;"></div>
<div style="position:absolute;left:104.00px;top:52.00px;width:1px;height:20px;background:#d5dbea;"></div>
<div style="position:absolute;left:208.00px;top:52.00px;width:1px;height:20px;background:#d5dbea;"></div>
<div style="position:absolute;left:508.00px;top:52.00px;width:1px;height:20px;background:#d5dbea;"></div>
<div style="position:absolute;left:588.00px;top:52.00px;width:1px;height:20px;background:#d5dbea;"></div>
<div style="position:absolute;left:674.00px;top:52.00px;width:1px;height:20px;background:#d5dbea;"></div>
<div style="position:absolute;left:756.00px;top:52.00px;width:1px;height:20px;background:#d5dbea;"></div>
<div style="position:absolute;left:829.00px;top:52.00px;width:1px;height:20px;background:#d5dbea;"></div>
<div style="position:absolute;left:894.00px;top:52.00px;width:1px;height:20px;background:#d5dbea;"></div>
<div style="position:absolute;left:964.00px;top:52.00px;width:1px;height:20px;background:#d5dbea;"></div>
<div class="t" style="left:-198.00px;width:300px;text-align:right;top:55.60px;font-size:12px;color:#000;font-weight:400;transform:scaleX(0.915);transform-origin:100% 50%;">1003</div>
<div class="t" style="left:107.00px;top:55.60px;font-size:12px;color:#000;font-weight:400;transform:scaleX(0.915);transform-origin:0 50%;">COPCO001</div>
<div class="t" style="left:211.00px;top:55.60px;font-size:12px;color:#000;font-weight:400;transform:scaleX(0.915);transform-origin:0 50%;">COPO COLAR PT12</div>
<div class="t" style="left:286.00px;width:300px;text-align:right;top:55.60px;font-size:12px;color:#000;font-weight:400;transform:scaleX(0.915);transform-origin:100% 50%;">0,6</div>
<div class="t" style="left:372.00px;width:300px;text-align:right;top:55.60px;font-size:12px;color:#000;font-weight:400;transform:scaleX(0.915);transform-origin:100% 50%;">100000</div>
<div class="t" style="left:454.00px;width:300px;text-align:right;top:55.60px;font-size:12px;color:#000;font-weight:400;transform:scaleX(0.915);transform-origin:100% 50%;">60.000,00</div>
<div class="t" style="left:527.00px;width:300px;text-align:right;top:55.60px;font-size:12px;color:#000;font-weight:400;transform:scaleX(0.915);transform-origin:100% 50%;">0</div>
<div class="t" style="left:592.00px;width:300px;text-align:right;top:55.60px;font-size:12px;color:#000;font-weight:400;transform:scaleX(0.915);transform-origin:100% 50%;">0,00</div>
<div class="t" style="left:662.00px;width:300px;text-align:right;top:55.60px;font-size:12px;color:#000;font-weight:400;transform:scaleX(0.915);transform-origin:100% 50%;">100000</div>
<div class="t" style="left:730.00px;width:300px;text-align:right;top:55.60px;font-size:12px;color:#000;font-weight:400;transform:scaleX(0.915);transform-origin:100% 50%;">100,00</div>
<div style="position:absolute;left:0.00px;top:72.00px;width:11px;height:19px;background:linear-gradient(90deg,#f4f4f4,#e6e6e6);"></div>
<div style="position:absolute;left:0.00px;top:91.00px;width:11px;height:1px;background:#c8c8c8;"></div>
<div style="position:absolute;left:11.00px;top:71.00px;width:1px;height:21px;background:#b4b4b4;"></div>
<div style="position:absolute;left:12.00px;top:72.00px;width:1020px;height:19px;background:#f4f5fe;"></div>
<div style="position:absolute;left:12.00px;top:91.00px;width:1020px;height:1px;background:#d5dbea;"></div>
<div style="position:absolute;left:104.00px;top:72.00px;width:1px;height:20px;background:#d5dbea;"></div>
<div style="position:absolute;left:208.00px;top:72.00px;width:1px;height:20px;background:#d5dbea;"></div>
<div style="position:absolute;left:508.00px;top:72.00px;width:1px;height:20px;background:#d5dbea;"></div>
<div style="position:absolute;left:588.00px;top:72.00px;width:1px;height:20px;background:#d5dbea;"></div>
<div style="position:absolute;left:674.00px;top:72.00px;width:1px;height:20px;background:#d5dbea;"></div>
<div style="position:absolute;left:756.00px;top:72.00px;width:1px;height:20px;background:#d5dbea;"></div>
<div style="position:absolute;left:829.00px;top:72.00px;width:1px;height:20px;background:#d5dbea;"></div>
<div style="position:absolute;left:894.00px;top:72.00px;width:1px;height:20px;background:#d5dbea;"></div>
<div style="position:absolute;left:964.00px;top:72.00px;width:1px;height:20px;background:#d5dbea;"></div>
<div class="t" style="left:-198.00px;width:300px;text-align:right;top:75.60px;font-size:12px;color:#000;font-weight:400;transform:scaleX(0.915);transform-origin:100% 50%;">1003</div>
<div class="t" style="left:107.00px;top:75.60px;font-size:12px;color:#000;font-weight:400;transform:scaleX(0.915);transform-origin:0 50%;">COPCO001</div>
<div class="t" style="left:211.00px;top:75.60px;font-size:12px;color:#000;font-weight:400;transform:scaleX(0.915);transform-origin:0 50%;">COPO COLAR PT12</div>
<div class="t" style="left:286.00px;width:300px;text-align:right;top:75.60px;font-size:12px;color:#000;font-weight:400;transform:scaleX(0.915);transform-origin:100% 50%;">0,6</div>
<div class="t" style="left:372.00px;width:300px;text-align:right;top:75.60px;font-size:12px;color:#000;font-weight:400;transform:scaleX(0.915);transform-origin:100% 50%;">0</div>
<div class="t" style="left:454.00px;width:300px;text-align:right;top:75.60px;font-size:12px;color:#000;font-weight:400;transform:scaleX(0.915);transform-origin:100% 50%;">0,00</div>
<div class="t" style="left:527.00px;width:300px;text-align:right;top:75.60px;font-size:12px;color:#000;font-weight:400;transform:scaleX(0.915);transform-origin:100% 50%;">1000</div>
<div class="t" style="left:592.00px;width:300px;text-align:right;top:75.60px;font-size:12px;color:#000;font-weight:400;transform:scaleX(0.915);transform-origin:100% 50%;">660,00</div>
<div class="t" style="left:662.00px;width:300px;text-align:right;top:75.60px;font-size:12px;color:#000;font-weight:400;transform:scaleX(0.915);transform-origin:100% 50%;">0</div>
<div style="position:absolute;left:0.00px;top:92.00px;width:11px;height:19px;background:linear-gradient(90deg,#f4f4f4,#e6e6e6);"></div>
<div style="position:absolute;left:0.00px;top:111.00px;width:11px;height:1px;background:#c8c8c8;"></div>
<div style="position:absolute;left:11.00px;top:91.00px;width:1px;height:21px;background:#b4b4b4;"></div>
<div style="position:absolute;left:12.00px;top:92.00px;width:1020px;height:19px;background:#fff6eb;"></div>
<div style="position:absolute;left:12.00px;top:111.00px;width:1020px;height:1px;background:#d5dbea;"></div>
<div style="position:absolute;left:104.00px;top:92.00px;width:1px;height:20px;background:#d5dbea;"></div>
<div style="position:absolute;left:208.00px;top:92.00px;width:1px;height:20px;background:#d5dbea;"></div>
<div style="position:absolute;left:508.00px;top:92.00px;width:1px;height:20px;background:#d5dbea;"></div>
<div style="position:absolute;left:588.00px;top:92.00px;width:1px;height:20px;background:#d5dbea;"></div>
<div style="position:absolute;left:674.00px;top:92.00px;width:1px;height:20px;background:#d5dbea;"></div>
<div style="position:absolute;left:756.00px;top:92.00px;width:1px;height:20px;background:#d5dbea;"></div>
<div style="position:absolute;left:829.00px;top:92.00px;width:1px;height:20px;background:#d5dbea;"></div>
<div style="position:absolute;left:894.00px;top:92.00px;width:1px;height:20px;background:#d5dbea;"></div>
<div style="position:absolute;left:964.00px;top:92.00px;width:1px;height:20px;background:#d5dbea;"></div>
<div class="t" style="left:-198.00px;width:300px;text-align:right;top:95.60px;font-size:12px;color:#000;font-weight:400;transform:scaleX(0.915);transform-origin:100% 50%;">4153</div>
<div class="t" style="left:107.00px;top:95.60px;font-size:12px;color:#000;font-weight:400;transform:scaleX(0.915);transform-origin:0 50%;">PO20023</div>
<div class="t" style="left:211.00px;top:95.60px;font-size:12px;color:#000;font-weight:400;transform:scaleX(0.915);transform-origin:0 50%;">POTE 20 AD PRETO</div>
<div class="t" style="left:286.00px;width:300px;text-align:right;top:95.60px;font-size:12px;color:#000;font-weight:400;transform:scaleX(0.915);transform-origin:100% 50%;">0,54</div>
<div class="t" style="left:372.00px;width:300px;text-align:right;top:95.60px;font-size:12px;color:#000;font-weight:400;transform:scaleX(0.915);transform-origin:100% 50%;">111600</div>
<div class="t" style="left:454.00px;width:300px;text-align:right;top:95.60px;font-size:12px;color:#000;font-weight:400;transform:scaleX(0.915);transform-origin:100% 50%;">60.264,00</div>
<div class="t" style="left:527.00px;width:300px;text-align:right;top:95.60px;font-size:12px;color:#000;font-weight:400;transform:scaleX(0.915);transform-origin:100% 50%;">0</div>
<div class="t" style="left:592.00px;width:300px;text-align:right;top:95.60px;font-size:12px;color:#000;font-weight:400;transform:scaleX(0.915);transform-origin:100% 50%;">0,00</div>
<div class="t" style="left:662.00px;width:300px;text-align:right;top:95.60px;font-size:12px;color:#000;font-weight:400;transform:scaleX(0.915);transform-origin:100% 50%;">111600</div>
<div class="t" style="left:730.00px;width:300px;text-align:right;top:95.60px;font-size:12px;color:#000;font-weight:400;transform:scaleX(0.915);transform-origin:100% 50%;">600,00</div>
<div style="position:absolute;left:0.00px;top:112.00px;width:11px;height:19px;background:linear-gradient(90deg,#f4f4f4,#e6e6e6);"></div>
<div style="position:absolute;left:0.00px;top:131.00px;width:11px;height:1px;background:#c8c8c8;"></div>
<div style="position:absolute;left:11.00px;top:111.00px;width:1px;height:21px;background:#b4b4b4;"></div>
<div style="position:absolute;left:12.00px;top:112.00px;width:1020px;height:19px;background:#f4f5fe;"></div>
<div style="position:absolute;left:12.00px;top:131.00px;width:1020px;height:1px;background:#d5dbea;"></div>
<div style="position:absolute;left:104.00px;top:112.00px;width:1px;height:20px;background:#d5dbea;"></div>
<div style="position:absolute;left:208.00px;top:112.00px;width:1px;height:20px;background:#d5dbea;"></div>
<div style="position:absolute;left:508.00px;top:112.00px;width:1px;height:20px;background:#d5dbea;"></div>
<div style="position:absolute;left:588.00px;top:112.00px;width:1px;height:20px;background:#d5dbea;"></div>
<div style="position:absolute;left:674.00px;top:112.00px;width:1px;height:20px;background:#d5dbea;"></div>
<div style="position:absolute;left:756.00px;top:112.00px;width:1px;height:20px;background:#d5dbea;"></div>
<div style="position:absolute;left:829.00px;top:112.00px;width:1px;height:20px;background:#d5dbea;"></div>
<div style="position:absolute;left:894.00px;top:112.00px;width:1px;height:20px;background:#d5dbea;"></div>
<div style="position:absolute;left:964.00px;top:112.00px;width:1px;height:20px;background:#d5dbea;"></div>
<div class="t" style="left:-198.00px;width:300px;text-align:right;top:115.60px;font-size:12px;color:#000;font-weight:400;transform:scaleX(0.915);transform-origin:100% 50%;">4595</div>
<div class="t" style="left:107.00px;top:115.60px;font-size:12px;color:#000;font-weight:400;transform:scaleX(0.915);transform-origin:0 50%;">PO20023</div>
<div class="t" style="left:211.00px;top:115.60px;font-size:12px;color:#000;font-weight:400;transform:scaleX(0.915);transform-origin:0 50%;">POTE 20 AD PRETO</div>
<div class="t" style="left:286.00px;width:300px;text-align:right;top:115.60px;font-size:12px;color:#000;font-weight:400;transform:scaleX(0.915);transform-origin:100% 50%;">0,54</div>
<div class="t" style="left:372.00px;width:300px;text-align:right;top:115.60px;font-size:12px;color:#000;font-weight:400;transform:scaleX(0.915);transform-origin:100% 50%;">105000</div>
<div class="t" style="left:454.00px;width:300px;text-align:right;top:115.60px;font-size:12px;color:#000;font-weight:400;transform:scaleX(0.915);transform-origin:100% 50%;">56.700,00</div>
<div class="t" style="left:527.00px;width:300px;text-align:right;top:115.60px;font-size:12px;color:#000;font-weight:400;transform:scaleX(0.915);transform-origin:100% 50%;">0</div>
<div class="t" style="left:592.00px;width:300px;text-align:right;top:115.60px;font-size:12px;color:#000;font-weight:400;transform:scaleX(0.915);transform-origin:100% 50%;">0,00</div>
<div class="t" style="left:662.00px;width:300px;text-align:right;top:115.60px;font-size:12px;color:#000;font-weight:400;transform:scaleX(0.915);transform-origin:100% 50%;">105000</div>
<div class="t" style="left:730.00px;width:300px;text-align:right;top:115.60px;font-size:12px;color:#000;font-weight:400;transform:scaleX(0.915);transform-origin:100% 50%;">2.000,00</div>
<div style="position:absolute;left:0.00px;top:132.00px;width:11px;height:19px;background:linear-gradient(90deg,#f4f4f4,#e6e6e6);"></div>
<div style="position:absolute;left:0.00px;top:151.00px;width:11px;height:1px;background:#c8c8c8;"></div>
<div style="position:absolute;left:11.00px;top:131.00px;width:1px;height:21px;background:#b4b4b4;"></div>
<div style="position:absolute;left:12.00px;top:132.00px;width:1020px;height:19px;background:#fff6eb;"></div>
<div style="position:absolute;left:12.00px;top:151.00px;width:1020px;height:1px;background:#d5dbea;"></div>
<div style="position:absolute;left:104.00px;top:132.00px;width:1px;height:20px;background:#d5dbea;"></div>
<div style="position:absolute;left:208.00px;top:132.00px;width:1px;height:20px;background:#d5dbea;"></div>
<div style="position:absolute;left:508.00px;top:132.00px;width:1px;height:20px;background:#d5dbea;"></div>
<div style="position:absolute;left:588.00px;top:132.00px;width:1px;height:20px;background:#d5dbea;"></div>
<div style="position:absolute;left:674.00px;top:132.00px;width:1px;height:20px;background:#d5dbea;"></div>
<div style="position:absolute;left:756.00px;top:132.00px;width:1px;height:20px;background:#d5dbea;"></div>
<div style="position:absolute;left:829.00px;top:132.00px;width:1px;height:20px;background:#d5dbea;"></div>
<div style="position:absolute;left:894.00px;top:132.00px;width:1px;height:20px;background:#d5dbea;"></div>
<div style="position:absolute;left:964.00px;top:132.00px;width:1px;height:20px;background:#d5dbea;"></div>
<div class="t" style="left:-198.00px;width:300px;text-align:right;top:135.60px;font-size:12px;color:#000;font-weight:400;transform:scaleX(0.915);transform-origin:100% 50%;">10047</div>
<div class="t" style="left:107.00px;top:135.60px;font-size:12px;color:#000;font-weight:400;transform:scaleX(0.915);transform-origin:0 50%;">PO07013</div>
<div class="t" style="left:211.00px;top:135.60px;font-size:12px;color:#000;font-weight:400;transform:scaleX(0.915);transform-origin:0 50%;">POTE 07 INUND BRANCO</div>
<div class="t" style="left:286.00px;width:300px;text-align:right;top:135.60px;font-size:12px;color:#000;font-weight:400;transform:scaleX(0.915);transform-origin:100% 50%;">0,2411</div>
<div class="t" style="left:372.00px;width:300px;text-align:right;top:135.60px;font-size:12px;color:#000;font-weight:400;transform:scaleX(0.915);transform-origin:100% 50%;">465000</div>
<div class="t" style="left:454.00px;width:300px;text-align:right;top:135.60px;font-size:12px;color:#000;font-weight:400;transform:scaleX(0.915);transform-origin:100% 50%;">112.111,50</div>
<div class="t" style="left:527.00px;width:300px;text-align:right;top:135.60px;font-size:12px;color:#000;font-weight:400;transform:scaleX(0.915);transform-origin:100% 50%;">0</div>
<div class="t" style="left:592.00px;width:300px;text-align:right;top:135.60px;font-size:12px;color:#000;font-weight:400;transform:scaleX(0.915);transform-origin:100% 50%;">0,00</div>
<div class="t" style="left:662.00px;width:300px;text-align:right;top:135.60px;font-size:12px;color:#000;font-weight:400;transform:scaleX(0.915);transform-origin:100% 50%;">465000</div>
<div class="t" style="left:730.00px;width:300px;text-align:right;top:135.60px;font-size:12px;color:#000;font-weight:400;transform:scaleX(0.915);transform-origin:100% 50%;">5.000,00</div>
<div style="position:absolute;left:0.00px;top:152.00px;width:11px;height:19px;background:linear-gradient(90deg,#f4f4f4,#e6e6e6);"></div>
<div style="position:absolute;left:0.00px;top:171.00px;width:11px;height:1px;background:#c8c8c8;"></div>
<div style="position:absolute;left:11.00px;top:151.00px;width:1px;height:21px;background:#b4b4b4;"></div>
<div style="position:absolute;left:12.00px;top:152.00px;width:1020px;height:19px;background:#f4f5fe;"></div>
<div style="position:absolute;left:12.00px;top:171.00px;width:1020px;height:1px;background:#d5dbea;"></div>
<div style="position:absolute;left:104.00px;top:152.00px;width:1px;height:20px;background:#d5dbea;"></div>
<div style="position:absolute;left:208.00px;top:152.00px;width:1px;height:20px;background:#d5dbea;"></div>
<div style="position:absolute;left:508.00px;top:152.00px;width:1px;height:20px;background:#d5dbea;"></div>
<div style="position:absolute;left:588.00px;top:152.00px;width:1px;height:20px;background:#d5dbea;"></div>
<div style="position:absolute;left:674.00px;top:152.00px;width:1px;height:20px;background:#d5dbea;"></div>
<div style="position:absolute;left:756.00px;top:152.00px;width:1px;height:20px;background:#d5dbea;"></div>
<div style="position:absolute;left:829.00px;top:152.00px;width:1px;height:20px;background:#d5dbea;"></div>
<div style="position:absolute;left:894.00px;top:152.00px;width:1px;height:20px;background:#d5dbea;"></div>
<div style="position:absolute;left:964.00px;top:152.00px;width:1px;height:20px;background:#d5dbea;"></div>
<div class="t" style="left:-198.00px;width:300px;text-align:right;top:155.60px;font-size:12px;color:#000;font-weight:400;transform:scaleX(0.915);transform-origin:100% 50%;">10047</div>
<div class="t" style="left:107.00px;top:155.60px;font-size:12px;color:#000;font-weight:400;transform:scaleX(0.915);transform-origin:0 50%;">PO09059</div>
<div class="t" style="left:211.00px;top:155.60px;font-size:12px;color:#000;font-weight:400;transform:scaleX(0.915);transform-origin:0 50%;">POTE 09 KE INCOLOR</div>
<div class="t" style="left:286.00px;width:300px;text-align:right;top:155.60px;font-size:12px;color:#000;font-weight:400;transform:scaleX(0.915);transform-origin:100% 50%;">0,4074</div>
<div class="t" style="left:372.00px;width:300px;text-align:right;top:155.60px;font-size:12px;color:#000;font-weight:400;transform:scaleX(0.915);transform-origin:100% 50%;">918000</div>
<div class="t" style="left:454.00px;width:300px;text-align:right;top:155.60px;font-size:12px;color:#000;font-weight:400;transform:scaleX(0.915);transform-origin:100% 50%;">373.993,20</div>
<div class="t" style="left:527.00px;width:300px;text-align:right;top:155.60px;font-size:12px;color:#000;font-weight:400;transform:scaleX(0.915);transform-origin:100% 50%;">0</div>
<div class="t" style="left:592.00px;width:300px;text-align:right;top:155.60px;font-size:12px;color:#000;font-weight:400;transform:scaleX(0.915);transform-origin:100% 50%;">0,00</div>
<div class="t" style="left:662.00px;width:300px;text-align:right;top:155.60px;font-size:12px;color:#000;font-weight:400;transform:scaleX(0.915);transform-origin:100% 50%;">918000</div>
<div style="position:absolute;left:0.00px;top:172.00px;width:11px;height:19px;background:linear-gradient(90deg,#f4f4f4,#e6e6e6);"></div>
<div style="position:absolute;left:0.00px;top:191.00px;width:11px;height:1px;background:#c8c8c8;"></div>
<div style="position:absolute;left:11.00px;top:171.00px;width:1px;height:21px;background:#b4b4b4;"></div>
<div style="position:absolute;left:12.00px;top:172.00px;width:1020px;height:19px;background:#fff6eb;"></div>
<div style="position:absolute;left:12.00px;top:191.00px;width:1020px;height:1px;background:#d5dbea;"></div>
<div style="position:absolute;left:104.00px;top:172.00px;width:1px;height:20px;background:#d5dbea;"></div>
<div style="position:absolute;left:208.00px;top:172.00px;width:1px;height:20px;background:#d5dbea;"></div>
<div style="position:absolute;left:508.00px;top:172.00px;width:1px;height:20px;background:#d5dbea;"></div>
<div style="position:absolute;left:588.00px;top:172.00px;width:1px;height:20px;background:#d5dbea;"></div>
<div style="position:absolute;left:674.00px;top:172.00px;width:1px;height:20px;background:#d5dbea;"></div>
<div style="position:absolute;left:756.00px;top:172.00px;width:1px;height:20px;background:#d5dbea;"></div>
<div style="position:absolute;left:829.00px;top:172.00px;width:1px;height:20px;background:#d5dbea;"></div>
<div style="position:absolute;left:894.00px;top:172.00px;width:1px;height:20px;background:#d5dbea;"></div>
<div style="position:absolute;left:964.00px;top:172.00px;width:1px;height:20px;background:#d5dbea;"></div>
<div class="t" style="left:-198.00px;width:300px;text-align:right;top:175.60px;font-size:12px;color:#000;font-weight:400;transform:scaleX(0.915);transform-origin:100% 50%;">10047</div>
<div class="t" style="left:107.00px;top:175.60px;font-size:12px;color:#000;font-weight:400;transform:scaleX(0.915);transform-origin:0 50%;">PO09065</div>
<div class="t" style="left:211.00px;top:175.60px;font-size:12px;color:#000;font-weight:400;transform:scaleX(0.915);transform-origin:0 50%;">POTE 09 INUND BRANCO</div>
<div class="t" style="left:286.00px;width:300px;text-align:right;top:175.60px;font-size:12px;color:#000;font-weight:400;transform:scaleX(0.915);transform-origin:100% 50%;">0,3219</div>
<div class="t" style="left:372.00px;width:300px;text-align:right;top:175.60px;font-size:12px;color:#000;font-weight:400;transform:scaleX(0.915);transform-origin:100% 50%;">45800</div>
<div class="t" style="left:454.00px;width:300px;text-align:right;top:175.60px;font-size:12px;color:#000;font-weight:400;transform:scaleX(0.915);transform-origin:100% 50%;">14.743,02</div>
<div class="t" style="left:527.00px;width:300px;text-align:right;top:175.60px;font-size:12px;color:#000;font-weight:400;transform:scaleX(0.915);transform-origin:100% 50%;">0</div>
<div class="t" style="left:592.00px;width:300px;text-align:right;top:175.60px;font-size:12px;color:#000;font-weight:400;transform:scaleX(0.915);transform-origin:100% 50%;">0,00</div>
<div class="t" style="left:662.00px;width:300px;text-align:right;top:175.60px;font-size:12px;color:#000;font-weight:400;transform:scaleX(0.915);transform-origin:100% 50%;">45800</div>
<div style="position:absolute;left:0.00px;top:192.00px;width:11px;height:19px;background:linear-gradient(90deg,#f4f4f4,#e6e6e6);"></div>
<div style="position:absolute;left:0.00px;top:211.00px;width:11px;height:1px;background:#c8c8c8;"></div>
<div style="position:absolute;left:11.00px;top:191.00px;width:1px;height:21px;background:#b4b4b4;"></div>
<div style="position:absolute;left:12.00px;top:192.00px;width:1020px;height:19px;background:#f4f5fe;"></div>
<div style="position:absolute;left:12.00px;top:211.00px;width:1020px;height:1px;background:#d5dbea;"></div>
<div style="position:absolute;left:104.00px;top:192.00px;width:1px;height:20px;background:#d5dbea;"></div>
<div style="position:absolute;left:208.00px;top:192.00px;width:1px;height:20px;background:#d5dbea;"></div>
<div style="position:absolute;left:508.00px;top:192.00px;width:1px;height:20px;background:#d5dbea;"></div>
<div style="position:absolute;left:588.00px;top:192.00px;width:1px;height:20px;background:#d5dbea;"></div>
<div style="position:absolute;left:674.00px;top:192.00px;width:1px;height:20px;background:#d5dbea;"></div>
<div style="position:absolute;left:756.00px;top:192.00px;width:1px;height:20px;background:#d5dbea;"></div>
<div style="position:absolute;left:829.00px;top:192.00px;width:1px;height:20px;background:#d5dbea;"></div>
<div style="position:absolute;left:894.00px;top:192.00px;width:1px;height:20px;background:#d5dbea;"></div>
<div style="position:absolute;left:964.00px;top:192.00px;width:1px;height:20px;background:#d5dbea;"></div>
<div class="t" style="left:-198.00px;width:300px;text-align:right;top:195.60px;font-size:12px;color:#000;font-weight:400;transform:scaleX(0.915);transform-origin:100% 50%;">10047</div>
<div class="t" style="left:107.00px;top:195.60px;font-size:12px;color:#000;font-weight:400;transform:scaleX(0.915);transform-origin:0 50%;">PO12051</div>
<div class="t" style="left:211.00px;top:195.60px;font-size:12px;color:#000;font-weight:400;transform:scaleX(0.915);transform-origin:0 50%;">POTE 12 KE BRANCO</div>
<div class="t" style="left:286.00px;width:300px;text-align:right;top:195.60px;font-size:12px;color:#000;font-weight:400;transform:scaleX(0.915);transform-origin:100% 50%;">0,41</div>
<div class="t" style="left:372.00px;width:300px;text-align:right;top:195.60px;font-size:12px;color:#000;font-weight:400;transform:scaleX(0.915);transform-origin:100% 50%;">430000</div>
<div class="t" style="left:454.00px;width:300px;text-align:right;top:195.60px;font-size:12px;color:#000;font-weight:400;transform:scaleX(0.915);transform-origin:100% 50%;">176.300,00</div>
<div class="t" style="left:527.00px;width:300px;text-align:right;top:195.60px;font-size:12px;color:#000;font-weight:400;transform:scaleX(0.915);transform-origin:100% 50%;">0</div>
<div class="t" style="left:592.00px;width:300px;text-align:right;top:195.60px;font-size:12px;color:#000;font-weight:400;transform:scaleX(0.915);transform-origin:100% 50%;">0,00</div>
<div class="t" style="left:662.00px;width:300px;text-align:right;top:195.60px;font-size:12px;color:#000;font-weight:400;transform:scaleX(0.915);transform-origin:100% 50%;">430000</div>
<div style="position:absolute;left:0.00px;top:212.00px;width:11px;height:19px;background:linear-gradient(90deg,#f4f4f4,#e6e6e6);"></div>
<div style="position:absolute;left:0.00px;top:231.00px;width:11px;height:1px;background:#c8c8c8;"></div>
<div style="position:absolute;left:11.00px;top:211.00px;width:1px;height:21px;background:#b4b4b4;"></div>
<div style="position:absolute;left:12.00px;top:212.00px;width:1020px;height:19px;background:#fff6eb;"></div>
<div style="position:absolute;left:12.00px;top:231.00px;width:1020px;height:1px;background:#d5dbea;"></div>
<div style="position:absolute;left:104.00px;top:212.00px;width:1px;height:20px;background:#d5dbea;"></div>
<div style="position:absolute;left:208.00px;top:212.00px;width:1px;height:20px;background:#d5dbea;"></div>
<div style="position:absolute;left:508.00px;top:212.00px;width:1px;height:20px;background:#d5dbea;"></div>
<div style="position:absolute;left:588.00px;top:212.00px;width:1px;height:20px;background:#d5dbea;"></div>
<div style="position:absolute;left:674.00px;top:212.00px;width:1px;height:20px;background:#d5dbea;"></div>
<div style="position:absolute;left:756.00px;top:212.00px;width:1px;height:20px;background:#d5dbea;"></div>
<div style="position:absolute;left:829.00px;top:212.00px;width:1px;height:20px;background:#d5dbea;"></div>
<div style="position:absolute;left:894.00px;top:212.00px;width:1px;height:20px;background:#d5dbea;"></div>
<div style="position:absolute;left:964.00px;top:212.00px;width:1px;height:20px;background:#d5dbea;"></div>
<div class="t" style="left:-198.00px;width:300px;text-align:right;top:215.60px;font-size:12px;color:#000;font-weight:400;transform:scaleX(0.915);transform-origin:100% 50%;">10047</div>
<div class="t" style="left:107.00px;top:215.60px;font-size:12px;color:#000;font-weight:400;transform:scaleX(0.915);transform-origin:0 50%;">PO12055</div>
<div class="t" style="left:211.00px;top:215.60px;font-size:12px;color:#000;font-weight:400;transform:scaleX(0.915);transform-origin:0 50%;">POTE 12 KE INCOLOR</div>
<div class="t" style="left:286.00px;width:300px;text-align:right;top:215.60px;font-size:12px;color:#000;font-weight:400;transform:scaleX(0.915);transform-origin:100% 50%;">0,3965</div>
<div class="t" style="left:372.00px;width:300px;text-align:right;top:215.60px;font-size:12px;color:#000;font-weight:400;transform:scaleX(0.915);transform-origin:100% 50%;">657700</div>
<div class="t" style="left:454.00px;width:300px;text-align:right;top:215.60px;font-size:12px;color:#000;font-weight:400;transform:scaleX(0.915);transform-origin:100% 50%;">260.778,05</div>
<div class="t" style="left:527.00px;width:300px;text-align:right;top:215.60px;font-size:12px;color:#000;font-weight:400;transform:scaleX(0.915);transform-origin:100% 50%;">0</div>
<div class="t" style="left:592.00px;width:300px;text-align:right;top:215.60px;font-size:12px;color:#000;font-weight:400;transform:scaleX(0.915);transform-origin:100% 50%;">0,00</div>
<div class="t" style="left:662.00px;width:300px;text-align:right;top:215.60px;font-size:12px;color:#000;font-weight:400;transform:scaleX(0.915);transform-origin:100% 50%;">657700</div>
<div class="t" style="left:730.00px;width:300px;text-align:right;top:215.60px;font-size:12px;color:#000;font-weight:400;transform:scaleX(0.915);transform-origin:100% 50%;">3.000,00</div>
<div style="position:absolute;left:0.00px;top:232.00px;width:11px;height:19px;background:linear-gradient(90deg,#f4f4f4,#e6e6e6);"></div>
<div style="position:absolute;left:0.00px;top:251.00px;width:11px;height:1px;background:#c8c8c8;"></div>
<div style="position:absolute;left:11.00px;top:231.00px;width:1px;height:21px;background:#b4b4b4;"></div>
<div style="position:absolute;left:12.00px;top:232.00px;width:952px;height:19px;background:#3169c6;"></div>
<div style="position:absolute;left:964.00px;top:232.00px;width:68px;height:19px;background:#f4f5fe;"></div>
<div style="position:absolute;left:964.00px;top:231.00px;width:68px;height:20px;border:1px dotted #333;"></div>
<div style="position:absolute;left:12.00px;top:251.00px;width:1020px;height:1px;background:#d5dbea;"></div>
<div style="position:absolute;left:104.00px;top:232.00px;width:1px;height:20px;background:#2d5cb0;"></div>
<div style="position:absolute;left:208.00px;top:232.00px;width:1px;height:20px;background:#2d5cb0;"></div>
<div style="position:absolute;left:508.00px;top:232.00px;width:1px;height:20px;background:#2d5cb0;"></div>
<div style="position:absolute;left:588.00px;top:232.00px;width:1px;height:20px;background:#2d5cb0;"></div>
<div style="position:absolute;left:674.00px;top:232.00px;width:1px;height:20px;background:#2d5cb0;"></div>
<div style="position:absolute;left:756.00px;top:232.00px;width:1px;height:20px;background:#2d5cb0;"></div>
<div style="position:absolute;left:829.00px;top:232.00px;width:1px;height:20px;background:#2d5cb0;"></div>
<div style="position:absolute;left:894.00px;top:232.00px;width:1px;height:20px;background:#2d5cb0;"></div>
<div style="position:absolute;left:964.00px;top:232.00px;width:1px;height:20px;background:#d5dbea;"></div>
<div class="t" style="left:-198.00px;width:300px;text-align:right;top:235.60px;font-size:12px;color:#fff;font-weight:400;transform:scaleX(0.915);transform-origin:100% 50%;">10047</div>
<div class="t" style="left:107.00px;top:235.60px;font-size:12px;color:#fff;font-weight:400;transform:scaleX(0.915);transform-origin:0 50%;">SUPB001</div>
<div class="t" style="left:211.00px;top:235.60px;font-size:12px;color:#fff;font-weight:400;transform:scaleX(0.915);transform-origin:0 50%;">SUPORTE BULBO TV</div>
<div class="t" style="left:286.00px;width:300px;text-align:right;top:235.60px;font-size:12px;color:#fff;font-weight:400;transform:scaleX(0.915);transform-origin:100% 50%;">0,2198</div>
<div class="t" style="left:372.00px;width:300px;text-align:right;top:235.60px;font-size:12px;color:#fff;font-weight:400;transform:scaleX(0.915);transform-origin:100% 50%;">180000</div>
<div class="t" style="left:454.00px;width:300px;text-align:right;top:235.60px;font-size:12px;color:#fff;font-weight:400;transform:scaleX(0.915);transform-origin:100% 50%;">39.564,00</div>
<div class="t" style="left:527.00px;width:300px;text-align:right;top:235.60px;font-size:12px;color:#fff;font-weight:400;transform:scaleX(0.915);transform-origin:100% 50%;">0</div>
<div class="t" style="left:592.00px;width:300px;text-align:right;top:235.60px;font-size:12px;color:#fff;font-weight:400;transform:scaleX(0.915);transform-origin:100% 50%;">0,00</div>
<div class="t" style="left:662.00px;width:300px;text-align:right;top:235.60px;font-size:12px;color:#fff;font-weight:400;transform:scaleX(0.915);transform-origin:100% 50%;">180000</div>
<svg style="position:absolute;left:2px;top:237px" width="8" height="10"><path d="M1.3 0.3 L6.2 4.7 L1.3 9.1" stroke="#333" stroke-width="1.9" fill="none"/></svg>
<div style="position:absolute;left:12.00px;top:231.00px;width:952px;height:21px;border-top:1px dotted #b08a30;border-bottom:1px dotted #b08a30;border-left:1px dotted #b08a30;"></div>
<div style="position:absolute;left:0.00px;top:252.00px;width:11px;height:19px;background:linear-gradient(90deg,#f4f4f4,#e6e6e6);"></div>
<div style="position:absolute;left:0.00px;top:271.00px;width:11px;height:1px;background:#c8c8c8;"></div>
<div style="position:absolute;left:11.00px;top:251.00px;width:1px;height:21px;background:#b4b4b4;"></div>
<div style="position:absolute;left:12.00px;top:252.00px;width:1020px;height:19px;background:#fff6eb;"></div>
<div style="position:absolute;left:12.00px;top:271.00px;width:1020px;height:1px;background:#d5dbea;"></div>
<div style="position:absolute;left:104.00px;top:252.00px;width:1px;height:20px;background:#d5dbea;"></div>
<div style="position:absolute;left:208.00px;top:252.00px;width:1px;height:20px;background:#d5dbea;"></div>
<div style="position:absolute;left:508.00px;top:252.00px;width:1px;height:20px;background:#d5dbea;"></div>
<div style="position:absolute;left:588.00px;top:252.00px;width:1px;height:20px;background:#d5dbea;"></div>
<div style="position:absolute;left:674.00px;top:252.00px;width:1px;height:20px;background:#d5dbea;"></div>
<div style="position:absolute;left:756.00px;top:252.00px;width:1px;height:20px;background:#d5dbea;"></div>
<div style="position:absolute;left:829.00px;top:252.00px;width:1px;height:20px;background:#d5dbea;"></div>
<div style="position:absolute;left:894.00px;top:252.00px;width:1px;height:20px;background:#d5dbea;"></div>
<div style="position:absolute;left:964.00px;top:252.00px;width:1px;height:20px;background:#d5dbea;"></div>
<div class="t" style="left:-198.00px;width:300px;text-align:right;top:255.60px;font-size:12px;color:#000;font-weight:400;transform:scaleX(0.915);transform-origin:100% 50%;">10397</div>
<div class="t" style="left:107.00px;top:255.60px;font-size:12px;color:#000;font-weight:400;transform:scaleX(0.915);transform-origin:0 50%;">CU13001</div>
<div class="t" style="left:211.00px;top:255.60px;font-size:12px;color:#000;font-weight:400;transform:scaleX(0.915);transform-origin:0 50%;">CUIA 13 LISA PRETO</div>
<div class="t" style="left:286.00px;width:300px;text-align:right;top:255.60px;font-size:12px;color:#000;font-weight:400;transform:scaleX(0.915);transform-origin:100% 50%;">0,289</div>
<div class="t" style="left:372.00px;width:300px;text-align:right;top:255.60px;font-size:12px;color:#000;font-weight:400;transform:scaleX(0.915);transform-origin:100% 50%;">150</div>
<div class="t" style="left:454.00px;width:300px;text-align:right;top:255.60px;font-size:12px;color:#000;font-weight:400;transform:scaleX(0.915);transform-origin:100% 50%;">43,35</div>
<div class="t" style="left:527.00px;width:300px;text-align:right;top:255.60px;font-size:12px;color:#000;font-weight:400;transform:scaleX(0.915);transform-origin:100% 50%;">0</div>
<div class="t" style="left:592.00px;width:300px;text-align:right;top:255.60px;font-size:12px;color:#000;font-weight:400;transform:scaleX(0.915);transform-origin:100% 50%;">0,00</div>
<div class="t" style="left:662.00px;width:300px;text-align:right;top:255.60px;font-size:12px;color:#000;font-weight:400;transform:scaleX(0.915);transform-origin:100% 50%;">150</div>
<div style="position:absolute;left:0.00px;top:272.00px;width:11px;height:19px;background:linear-gradient(90deg,#f4f4f4,#e6e6e6);"></div>
<div style="position:absolute;left:0.00px;top:291.00px;width:11px;height:1px;background:#c8c8c8;"></div>
<div style="position:absolute;left:11.00px;top:271.00px;width:1px;height:21px;background:#b4b4b4;"></div>
<div style="position:absolute;left:12.00px;top:272.00px;width:1020px;height:19px;background:#f4f5fe;"></div>
<div style="position:absolute;left:12.00px;top:291.00px;width:1020px;height:1px;background:#d5dbea;"></div>
<div style="position:absolute;left:104.00px;top:272.00px;width:1px;height:20px;background:#d5dbea;"></div>
<div style="position:absolute;left:208.00px;top:272.00px;width:1px;height:20px;background:#d5dbea;"></div>
<div style="position:absolute;left:508.00px;top:272.00px;width:1px;height:20px;background:#d5dbea;"></div>
<div style="position:absolute;left:588.00px;top:272.00px;width:1px;height:20px;background:#d5dbea;"></div>
<div style="position:absolute;left:674.00px;top:272.00px;width:1px;height:20px;background:#d5dbea;"></div>
<div style="position:absolute;left:756.00px;top:272.00px;width:1px;height:20px;background:#d5dbea;"></div>
<div style="position:absolute;left:829.00px;top:272.00px;width:1px;height:20px;background:#d5dbea;"></div>
<div style="position:absolute;left:894.00px;top:272.00px;width:1px;height:20px;background:#d5dbea;"></div>
<div style="position:absolute;left:964.00px;top:272.00px;width:1px;height:20px;background:#d5dbea;"></div>
<div class="t" style="left:-198.00px;width:300px;text-align:right;top:275.60px;font-size:12px;color:#000;font-weight:400;transform:scaleX(0.915);transform-origin:100% 50%;">10397</div>
<div class="t" style="left:107.00px;top:275.60px;font-size:12px;color:#000;font-weight:400;transform:scaleX(0.915);transform-origin:0 50%;">CU13011</div>
<div class="t" style="left:211.00px;top:275.60px;font-size:12px;color:#000;font-weight:400;transform:scaleX(0.915);transform-origin:0 50%;">CUIA 13 LISA TERRACOTA</div>
<div class="t" style="left:286.00px;width:300px;text-align:right;top:275.60px;font-size:12px;color:#000;font-weight:400;transform:scaleX(0.915);transform-origin:100% 50%;">0,311</div>
<div class="t" style="left:372.00px;width:300px;text-align:right;top:275.60px;font-size:12px;color:#000;font-weight:400;transform:scaleX(0.915);transform-origin:100% 50%;">150</div>
<div class="t" style="left:454.00px;width:300px;text-align:right;top:275.60px;font-size:12px;color:#000;font-weight:400;transform:scaleX(0.915);transform-origin:100% 50%;">46,65</div>
<div class="t" style="left:527.00px;width:300px;text-align:right;top:275.60px;font-size:12px;color:#000;font-weight:400;transform:scaleX(0.915);transform-origin:100% 50%;">0</div>
<div class="t" style="left:592.00px;width:300px;text-align:right;top:275.60px;font-size:12px;color:#000;font-weight:400;transform:scaleX(0.915);transform-origin:100% 50%;">0,00</div>
<div class="t" style="left:662.00px;width:300px;text-align:right;top:275.60px;font-size:12px;color:#000;font-weight:400;transform:scaleX(0.915);transform-origin:100% 50%;">150</div>
<div style="position:absolute;left:0.00px;top:292.00px;width:11px;height:19px;background:linear-gradient(90deg,#f4f4f4,#e6e6e6);"></div>
<div style="position:absolute;left:0.00px;top:311.00px;width:11px;height:1px;background:#c8c8c8;"></div>
<div style="position:absolute;left:11.00px;top:291.00px;width:1px;height:21px;background:#b4b4b4;"></div>
<div style="position:absolute;left:12.00px;top:292.00px;width:1020px;height:19px;background:#fff6eb;"></div>
<div style="position:absolute;left:12.00px;top:311.00px;width:1020px;height:1px;background:#d5dbea;"></div>
<div style="position:absolute;left:104.00px;top:292.00px;width:1px;height:20px;background:#d5dbea;"></div>
<div style="position:absolute;left:208.00px;top:292.00px;width:1px;height:20px;background:#d5dbea;"></div>
<div style="position:absolute;left:508.00px;top:292.00px;width:1px;height:20px;background:#d5dbea;"></div>
<div style="position:absolute;left:588.00px;top:292.00px;width:1px;height:20px;background:#d5dbea;"></div>
<div style="position:absolute;left:674.00px;top:292.00px;width:1px;height:20px;background:#d5dbea;"></div>
<div style="position:absolute;left:756.00px;top:292.00px;width:1px;height:20px;background:#d5dbea;"></div>
<div style="position:absolute;left:829.00px;top:292.00px;width:1px;height:20px;background:#d5dbea;"></div>
<div style="position:absolute;left:894.00px;top:292.00px;width:1px;height:20px;background:#d5dbea;"></div>
<div style="position:absolute;left:964.00px;top:292.00px;width:1px;height:20px;background:#d5dbea;"></div>
<div class="t" style="left:-198.00px;width:300px;text-align:right;top:295.60px;font-size:12px;color:#000;font-weight:400;transform:scaleX(0.915);transform-origin:100% 50%;">10397</div>
<div class="t" style="left:107.00px;top:295.60px;font-size:12px;color:#000;font-weight:400;transform:scaleX(0.915);transform-origin:0 50%;">PO06026</div>
<div class="t" style="left:211.00px;top:295.60px;font-size:12px;color:#000;font-weight:400;transform:scaleX(0.915);transform-origin:0 50%;">POTE 06 TERRACOTA (NOVO)</div>
<div class="t" style="left:286.00px;width:300px;text-align:right;top:295.60px;font-size:12px;color:#000;font-weight:400;transform:scaleX(0.915);transform-origin:100% 50%;">0,098</div>
<div class="t" style="left:372.00px;width:300px;text-align:right;top:295.60px;font-size:12px;color:#000;font-weight:400;transform:scaleX(0.915);transform-origin:100% 50%;">609300</div>
<div class="t" style="left:454.00px;width:300px;text-align:right;top:295.60px;font-size:12px;color:#000;font-weight:400;transform:scaleX(0.915);transform-origin:100% 50%;">59.711,40</div>
<div class="t" style="left:527.00px;width:300px;text-align:right;top:295.60px;font-size:12px;color:#000;font-weight:400;transform:scaleX(0.915);transform-origin:100% 50%;">0</div>
<div class="t" style="left:592.00px;width:300px;text-align:right;top:295.60px;font-size:12px;color:#000;font-weight:400;transform:scaleX(0.915);transform-origin:100% 50%;">0,00</div>
<div class="t" style="left:662.00px;width:300px;text-align:right;top:295.60px;font-size:12px;color:#000;font-weight:400;transform:scaleX(0.915);transform-origin:100% 50%;">609300</div>
<div style="position:absolute;left:0.00px;top:312.00px;width:11px;height:19px;background:linear-gradient(90deg,#f4f4f4,#e6e6e6);"></div>
<div style="position:absolute;left:0.00px;top:331.00px;width:11px;height:1px;background:#c8c8c8;"></div>
<div style="position:absolute;left:11.00px;top:311.00px;width:1px;height:21px;background:#b4b4b4;"></div>
<div style="position:absolute;left:12.00px;top:312.00px;width:1020px;height:19px;background:#f4f5fe;"></div>
<div style="position:absolute;left:12.00px;top:331.00px;width:1020px;height:1px;background:#d5dbea;"></div>
<div style="position:absolute;left:104.00px;top:312.00px;width:1px;height:20px;background:#d5dbea;"></div>
<div style="position:absolute;left:208.00px;top:312.00px;width:1px;height:20px;background:#d5dbea;"></div>
<div style="position:absolute;left:508.00px;top:312.00px;width:1px;height:20px;background:#d5dbea;"></div>
<div style="position:absolute;left:588.00px;top:312.00px;width:1px;height:20px;background:#d5dbea;"></div>
<div style="position:absolute;left:674.00px;top:312.00px;width:1px;height:20px;background:#d5dbea;"></div>
<div style="position:absolute;left:756.00px;top:312.00px;width:1px;height:20px;background:#d5dbea;"></div>
<div style="position:absolute;left:829.00px;top:312.00px;width:1px;height:20px;background:#d5dbea;"></div>
<div style="position:absolute;left:894.00px;top:312.00px;width:1px;height:20px;background:#d5dbea;"></div>
<div style="position:absolute;left:964.00px;top:312.00px;width:1px;height:20px;background:#d5dbea;"></div>
<div class="t" style="left:-198.00px;width:300px;text-align:right;top:315.60px;font-size:12px;color:#000;font-weight:400;transform:scaleX(0.915);transform-origin:100% 50%;">10397</div>
<div class="t" style="left:107.00px;top:315.60px;font-size:12px;color:#000;font-weight:400;transform:scaleX(0.915);transform-origin:0 50%;">PO07014</div>
<div class="t" style="left:211.00px;top:315.60px;font-size:12px;color:#000;font-weight:400;transform:scaleX(0.915);transform-origin:0 50%;">POTE 07 INUND TERRACOTA</div>
<div class="t" style="left:286.00px;width:300px;text-align:right;top:315.60px;font-size:12px;color:#000;font-weight:400;transform:scaleX(0.915);transform-origin:100% 50%;">0,194</div>
<div class="t" style="left:372.00px;width:300px;text-align:right;top:315.60px;font-size:12px;color:#000;font-weight:400;transform:scaleX(0.915);transform-origin:100% 50%;">1350</div>
<div class="t" style="left:454.00px;width:300px;text-align:right;top:315.60px;font-size:12px;color:#000;font-weight:400;transform:scaleX(0.915);transform-origin:100% 50%;">261,90</div>
<div class="t" style="left:527.00px;width:300px;text-align:right;top:315.60px;font-size:12px;color:#000;font-weight:400;transform:scaleX(0.915);transform-origin:100% 50%;">0</div>
<div class="t" style="left:592.00px;width:300px;text-align:right;top:315.60px;font-size:12px;color:#000;font-weight:400;transform:scaleX(0.915);transform-origin:100% 50%;">0,00</div>
<div class="t" style="left:662.00px;width:300px;text-align:right;top:315.60px;font-size:12px;color:#000;font-weight:400;transform:scaleX(0.915);transform-origin:100% 50%;">1350</div>
<div style="position:absolute;left:0.00px;top:332.00px;width:11px;height:19px;background:linear-gradient(90deg,#f4f4f4,#e6e6e6);"></div>
<div style="position:absolute;left:0.00px;top:351.00px;width:11px;height:1px;background:#c8c8c8;"></div>
<div style="position:absolute;left:11.00px;top:331.00px;width:1px;height:21px;background:#b4b4b4;"></div>
<div style="position:absolute;left:12.00px;top:332.00px;width:1020px;height:19px;background:#fff6eb;"></div>
<div style="position:absolute;left:12.00px;top:351.00px;width:1020px;height:1px;background:#d5dbea;"></div>
<div style="position:absolute;left:104.00px;top:332.00px;width:1px;height:20px;background:#d5dbea;"></div>
<div style="position:absolute;left:208.00px;top:332.00px;width:1px;height:20px;background:#d5dbea;"></div>
<div style="position:absolute;left:508.00px;top:332.00px;width:1px;height:20px;background:#d5dbea;"></div>
<div style="position:absolute;left:588.00px;top:332.00px;width:1px;height:20px;background:#d5dbea;"></div>
<div style="position:absolute;left:674.00px;top:332.00px;width:1px;height:20px;background:#d5dbea;"></div>
<div style="position:absolute;left:756.00px;top:332.00px;width:1px;height:20px;background:#d5dbea;"></div>
<div style="position:absolute;left:829.00px;top:332.00px;width:1px;height:20px;background:#d5dbea;"></div>
<div style="position:absolute;left:894.00px;top:332.00px;width:1px;height:20px;background:#d5dbea;"></div>
<div style="position:absolute;left:964.00px;top:332.00px;width:1px;height:20px;background:#d5dbea;"></div>
<div class="t" style="left:-198.00px;width:300px;text-align:right;top:335.60px;font-size:12px;color:#000;font-weight:400;transform:scaleX(0.915);transform-origin:100% 50%;">10397</div>
<div class="t" style="left:107.00px;top:335.60px;font-size:12px;color:#000;font-weight:400;transform:scaleX(0.915);transform-origin:0 50%;">PO09063</div>
<div class="t" style="left:211.00px;top:335.60px;font-size:12px;color:#000;font-weight:400;transform:scaleX(0.915);transform-origin:0 50%;">POTE 09 INUND VERMELHO NATAL</div>
<div class="t" style="left:286.00px;width:300px;text-align:right;top:335.60px;font-size:12px;color:#000;font-weight:400;transform:scaleX(0.915);transform-origin:100% 50%;">0,255</div>
<div class="t" style="left:372.00px;width:300px;text-align:right;top:335.60px;font-size:12px;color:#000;font-weight:400;transform:scaleX(0.915);transform-origin:100% 50%;">63084</div>
<div class="t" style="left:454.00px;width:300px;text-align:right;top:335.60px;font-size:12px;color:#000;font-weight:400;transform:scaleX(0.915);transform-origin:100% 50%;">16.086,42</div>
<div class="t" style="left:527.00px;width:300px;text-align:right;top:335.60px;font-size:12px;color:#000;font-weight:400;transform:scaleX(0.915);transform-origin:100% 50%;">0</div>
<div class="t" style="left:592.00px;width:300px;text-align:right;top:335.60px;font-size:12px;color:#000;font-weight:400;transform:scaleX(0.915);transform-origin:100% 50%;">0,00</div>
<div class="t" style="left:662.00px;width:300px;text-align:right;top:335.60px;font-size:12px;color:#000;font-weight:400;transform:scaleX(0.915);transform-origin:100% 50%;">63084</div>
<div style="position:absolute;left:0.00px;top:352.00px;width:11px;height:19px;background:linear-gradient(90deg,#f4f4f4,#e6e6e6);"></div>
<div style="position:absolute;left:0.00px;top:371.00px;width:11px;height:1px;background:#c8c8c8;"></div>
<div style="position:absolute;left:11.00px;top:351.00px;width:1px;height:21px;background:#b4b4b4;"></div>
<div style="position:absolute;left:12.00px;top:352.00px;width:1020px;height:19px;background:#f4f5fe;"></div>
<div style="position:absolute;left:12.00px;top:371.00px;width:1020px;height:1px;background:#d5dbea;"></div>
<div style="position:absolute;left:104.00px;top:352.00px;width:1px;height:20px;background:#d5dbea;"></div>
<div style="position:absolute;left:208.00px;top:352.00px;width:1px;height:20px;background:#d5dbea;"></div>
<div style="position:absolute;left:508.00px;top:352.00px;width:1px;height:20px;background:#d5dbea;"></div>
<div style="position:absolute;left:588.00px;top:352.00px;width:1px;height:20px;background:#d5dbea;"></div>
<div style="position:absolute;left:674.00px;top:352.00px;width:1px;height:20px;background:#d5dbea;"></div>
<div style="position:absolute;left:756.00px;top:352.00px;width:1px;height:20px;background:#d5dbea;"></div>
<div style="position:absolute;left:829.00px;top:352.00px;width:1px;height:20px;background:#d5dbea;"></div>
<div style="position:absolute;left:894.00px;top:352.00px;width:1px;height:20px;background:#d5dbea;"></div>
<div style="position:absolute;left:964.00px;top:352.00px;width:1px;height:20px;background:#d5dbea;"></div>
<div class="t" style="left:-198.00px;width:300px;text-align:right;top:355.60px;font-size:12px;color:#000;font-weight:400;transform:scaleX(0.915);transform-origin:100% 50%;">10397</div>
<div class="t" style="left:107.00px;top:355.60px;font-size:12px;color:#000;font-weight:400;transform:scaleX(0.915);transform-origin:0 50%;">PO09064</div>
<div class="t" style="left:211.00px;top:355.60px;font-size:12px;color:#000;font-weight:400;transform:scaleX(0.915);transform-origin:0 50%;">POTE 09 INUND AMARELO</div>
<div class="t" style="left:286.00px;width:300px;text-align:right;top:355.60px;font-size:12px;color:#000;font-weight:400;transform:scaleX(0.915);transform-origin:100% 50%;">0,255</div>
<div class="t" style="left:372.00px;width:300px;text-align:right;top:355.60px;font-size:12px;color:#000;font-weight:400;transform:scaleX(0.915);transform-origin:100% 50%;">4200</div>
<div class="t" style="left:454.00px;width:300px;text-align:right;top:355.60px;font-size:12px;color:#000;font-weight:400;transform:scaleX(0.915);transform-origin:100% 50%;">1.071,00</div>
<div class="t" style="left:527.00px;width:300px;text-align:right;top:355.60px;font-size:12px;color:#000;font-weight:400;transform:scaleX(0.915);transform-origin:100% 50%;">0</div>
<div class="t" style="left:592.00px;width:300px;text-align:right;top:355.60px;font-size:12px;color:#000;font-weight:400;transform:scaleX(0.915);transform-origin:100% 50%;">0,00</div>
<div class="t" style="left:662.00px;width:300px;text-align:right;top:355.60px;font-size:12px;color:#000;font-weight:400;transform:scaleX(0.915);transform-origin:100% 50%;">4200</div>
<div style="position:absolute;left:0.00px;top:372.00px;width:11px;height:19px;background:linear-gradient(90deg,#f4f4f4,#e6e6e6);"></div>
<div style="position:absolute;left:0.00px;top:391.00px;width:11px;height:1px;background:#c8c8c8;"></div>
<div style="position:absolute;left:11.00px;top:371.00px;width:1px;height:21px;background:#b4b4b4;"></div>
<div style="position:absolute;left:12.00px;top:372.00px;width:1020px;height:19px;background:#fff6eb;"></div>
<div style="position:absolute;left:12.00px;top:391.00px;width:1020px;height:1px;background:#d5dbea;"></div>
<div style="position:absolute;left:104.00px;top:372.00px;width:1px;height:20px;background:#d5dbea;"></div>
<div style="position:absolute;left:208.00px;top:372.00px;width:1px;height:20px;background:#d5dbea;"></div>
<div style="position:absolute;left:508.00px;top:372.00px;width:1px;height:20px;background:#d5dbea;"></div>
<div style="position:absolute;left:588.00px;top:372.00px;width:1px;height:20px;background:#d5dbea;"></div>
<div style="position:absolute;left:674.00px;top:372.00px;width:1px;height:20px;background:#d5dbea;"></div>
<div style="position:absolute;left:756.00px;top:372.00px;width:1px;height:20px;background:#d5dbea;"></div>
<div style="position:absolute;left:829.00px;top:372.00px;width:1px;height:20px;background:#d5dbea;"></div>
<div style="position:absolute;left:894.00px;top:372.00px;width:1px;height:20px;background:#d5dbea;"></div>
<div style="position:absolute;left:964.00px;top:372.00px;width:1px;height:20px;background:#d5dbea;"></div>
<div class="t" style="left:-198.00px;width:300px;text-align:right;top:375.60px;font-size:12px;color:#000;font-weight:400;transform:scaleX(0.915);transform-origin:100% 50%;">10397</div>
<div class="t" style="left:107.00px;top:375.60px;font-size:12px;color:#000;font-weight:400;transform:scaleX(0.915);transform-origin:0 50%;">PO09066</div>
<div class="t" style="left:211.00px;top:375.60px;font-size:12px;color:#000;font-weight:400;transform:scaleX(0.915);transform-origin:0 50%;">POTE 09 INUND ROSA</div>
<div class="t" style="left:286.00px;width:300px;text-align:right;top:375.60px;font-size:12px;color:#000;font-weight:400;transform:scaleX(0.915);transform-origin:100% 50%;">0,255</div>
<div class="t" style="left:372.00px;width:300px;text-align:right;top:375.60px;font-size:12px;color:#000;font-weight:400;transform:scaleX(0.915);transform-origin:100% 50%;">31200</div>
<div class="t" style="left:454.00px;width:300px;text-align:right;top:375.60px;font-size:12px;color:#000;font-weight:400;transform:scaleX(0.915);transform-origin:100% 50%;">7.956,00</div>
<div class="t" style="left:527.00px;width:300px;text-align:right;top:375.60px;font-size:12px;color:#000;font-weight:400;transform:scaleX(0.915);transform-origin:100% 50%;">0</div>
<div class="t" style="left:592.00px;width:300px;text-align:right;top:375.60px;font-size:12px;color:#000;font-weight:400;transform:scaleX(0.915);transform-origin:100% 50%;">0,00</div>
<div class="t" style="left:662.00px;width:300px;text-align:right;top:375.60px;font-size:12px;color:#000;font-weight:400;transform:scaleX(0.915);transform-origin:100% 50%;">31200</div>
<div style="position:absolute;left:0.00px;top:392.00px;width:11px;height:6px;background:linear-gradient(90deg,#f4f4f4,#e6e6e6);"></div>
<div style="position:absolute;left:0.00px;top:411.00px;width:11px;height:1px;background:#c8c8c8;"></div>
<div style="position:absolute;left:11.00px;top:391.00px;width:1px;height:8px;background:#b4b4b4;"></div>
<div style="position:absolute;left:12.00px;top:392.00px;width:1020px;height:6px;background:#f4f5fe;"></div>
<div style="position:absolute;left:104.00px;top:392.00px;width:1px;height:6px;background:#d5dbea;"></div>
<div style="position:absolute;left:208.00px;top:392.00px;width:1px;height:6px;background:#d5dbea;"></div>
<div style="position:absolute;left:508.00px;top:392.00px;width:1px;height:6px;background:#d5dbea;"></div>
<div style="position:absolute;left:588.00px;top:392.00px;width:1px;height:6px;background:#d5dbea;"></div>
<div style="position:absolute;left:674.00px;top:392.00px;width:1px;height:6px;background:#d5dbea;"></div>
<div style="position:absolute;left:756.00px;top:392.00px;width:1px;height:6px;background:#d5dbea;"></div>
<div style="position:absolute;left:829.00px;top:392.00px;width:1px;height:6px;background:#d5dbea;"></div>
<div style="position:absolute;left:894.00px;top:392.00px;width:1px;height:6px;background:#d5dbea;"></div>
<div style="position:absolute;left:964.00px;top:392.00px;width:1px;height:6px;background:#d5dbea;"></div>
<div class="t" style="left:-198.00px;width:300px;text-align:right;top:395.20px;font-size:12px;color:#000;font-weight:400;transform:scaleX(0.915);transform-origin:100% 50%;">10397</div>
<div class="t" style="left:107.00px;top:395.20px;font-size:12px;color:#000;font-weight:400;transform:scaleX(0.915);transform-origin:0 50%;">PO09067</div>
<div class="t" style="left:211.00px;top:395.20px;font-size:12px;color:#000;font-weight:400;transform:scaleX(0.915);transform-origin:0 50%;">POTE 09 INUND TERRACOTA</div>
<div class="t" style="left:286.00px;width:300px;text-align:right;top:395.20px;font-size:12px;color:#000;font-weight:400;transform:scaleX(0.915);transform-origin:100% 50%;">0,285</div>
<div class="t" style="left:372.00px;width:300px;text-align:right;top:395.20px;font-size:12px;color:#000;font-weight:400;transform:scaleX(0.915);transform-origin:100% 50%;">203140</div>
<div class="t" style="left:454.00px;width:300px;text-align:right;top:395.20px;font-size:12px;color:#000;font-weight:400;transform:scaleX(0.915);transform-origin:100% 50%;">57.067,10</div>
<div class="t" style="left:527.00px;width:300px;text-align:right;top:395.20px;font-size:12px;color:#000;font-weight:400;transform:scaleX(0.915);transform-origin:100% 50%;">0</div>
<div class="t" style="left:592.00px;width:300px;text-align:right;top:395.20px;font-size:12px;color:#000;font-weight:400;transform:scaleX(0.915);transform-origin:100% 50%;">0,00</div>
<div class="t" style="left:662.00px;width:300px;text-align:right;top:395.20px;font-size:12px;color:#000;font-weight:400;transform:scaleX(0.915);transform-origin:100% 50%;">203140</div>
<div style="position:absolute;left:0.00px;top:398.00px;width:1032px;height:1px;background:#a0a0a0;"></div>
<div style="position:absolute;left:0.00px;top:399.00px;width:1032px;height:29px;background:linear-gradient(#f4f4f4,#e3e3e3);"></div>
<div style="position:absolute;left:675.00px;top:400.50px;width:81px;height:26px;background:linear-gradient(#ffffff,#f6f6f6);border:1px solid #dedede;"></div>
<div class="t" style="left:452.50px;width:300px;text-align:right;top:407.50px;font-size:12px;color:#222;font-weight:400;transform:scaleX(0.915);transform-origin:100% 50%;">2.468.078,93</div>
<div style="position:absolute;left:830.00px;top:400.50px;width:64px;height:26px;background:linear-gradient(#ffffff,#f6f6f6);border:1px solid #dedede;"></div>
<div class="t" style="left:590.50px;width:300px;text-align:right;top:407.50px;font-size:12px;color:#222;font-weight:400;transform:scaleX(0.915);transform-origin:100% 50%;">660,00</div>
<div style="position:absolute;left:-1.00px;top:428.00px;width:1067px;height:1px;background:#a0a0a0;"></div>
<div style="position:absolute;left:944.00px;top:438.50px;width:98px;height:26px;background:#fdfdfd;border:1px solid #cfcfcf;border-radius:3px;"></div>
<svg style="position:absolute;left:950px;top:442px" width="20" height="20"><path d="M1 11.3 L3.6 9.7 L6.3 13.2 Q10.5 6.5 16.8 2.8 L17.2 3.4 Q11.5 8.5 7.4 17.8 L5.6 17.8 Z" fill="#4060c8"/></svg>
<div class="t" style="left:976.30px;top:445.60px;font-size:12.3px;color:#000;font-weight:400;">Confirmar</div>
</div>
</body></html>
